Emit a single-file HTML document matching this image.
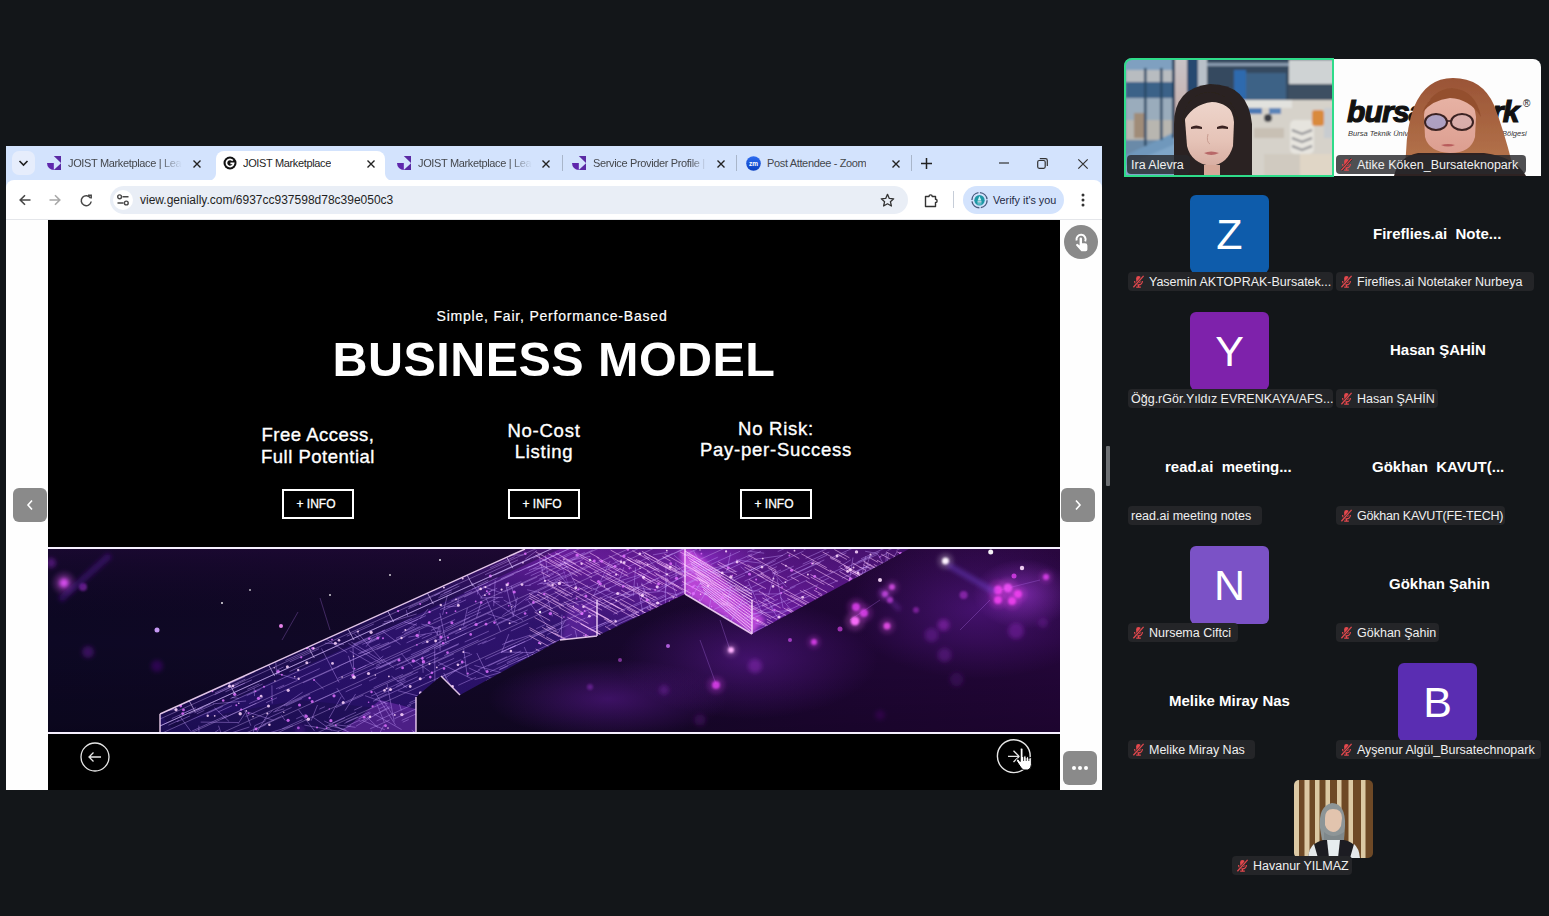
<!DOCTYPE html>
<html><head><meta charset="utf-8">
<style>
*{box-sizing:border-box;margin:0;padding:0}
html,body{width:1549px;height:916px;overflow:hidden;background:#131619;font-family:"Liberation Sans",sans-serif}
.a{position:absolute}
svg.a{overflow:visible}
.tt{position:absolute;top:157px;font-size:11px;letter-spacing:-0.35px;color:#44474c;white-space:nowrap;overflow:hidden;line-height:13px}
.sep{position:absolute;top:155px;width:1px;height:16px;background:#a9b6ca}
.w{color:#fff;position:absolute;white-space:nowrap}
.info{position:absolute;top:489px;width:72px;height:30px;border:2px solid #fff;color:#fff;font-size:12px;text-align:center;line-height:26px;-webkit-text-stroke:0.3px #fff}
.nb{position:absolute;background:#8a8a8a;border-radius:6px}
.lbl{position:absolute;height:19px;background:#242528;border-radius:4px;color:#f0f0f0;font-size:12.5px;line-height:20px;white-space:nowrap;padding-left:3px}
.lbl.m{padding-left:21px}
.bn{position:absolute;color:#fff;font-weight:bold;font-size:15px;white-space:nowrap;line-height:18px}
.av{position:absolute;width:79px;height:78px;border-radius:6px;color:#fff;font-size:43px;text-align:center;line-height:78px}
</style></head><body>
<!-- browser frame -->
<div class="a" style="left:6px;top:146px;width:1096px;height:644px;background:#d3e3fd"></div>
<div class="a" style="left:12px;top:151px;width:23px;height:24px;border-radius:7px;background:#e6edfc"></div>
<svg class="a" style="left:12px;top:151px" width="23" height="24"><path d="M7.5 10 L11.5 14 L15.5 10" fill="none" stroke="#1f1f1f" stroke-width="1.6"/></svg>
<!-- active tab -->
<div class="a" style="left:216px;top:151px;width:169px;height:30px;background:#fff;border-radius:8px 8px 0 0"></div>
<div class="a" style="left:208px;top:173px;width:8px;height:8px;background:radial-gradient(circle at 0 0,#d3e3fd 7.5px,#fff 8.5px)"></div>
<div class="a" style="left:385px;top:173px;width:8px;height:8px;background:radial-gradient(circle at 100% 0,#d3e3fd 7.5px,#fff 8.5px)"></div>
<!-- toolbar -->
<div class="a" style="left:6px;top:180px;width:1096px;height:40px;background:#fff;border-radius:8px 8px 0 0"></div>
<div class="a" style="left:6px;top:219px;width:1096px;height:1px;background:#e4e6ea"></div>
<!-- tab1 -->
<svg class="a" style="left:47px;top:156px" width="14" height="14"><path d="M6.8 0H14V7Z M6.8 14L14 7.2V14Z" fill="#5a2aa4"/><path d="M0 7H6.8V14A6.8 7 0 0 1 0 7Z" fill="#5f26ad"/></svg>
<div class="tt" style="left:68px;width:114px;-webkit-mask-image:linear-gradient(90deg,#000 80%,transparent)">JOIST Marketplace | Lead</div>
<svg class="a" style="left:193px;top:160px" width="8" height="8"><path d="M0.5 0.5 L7.5 7.5 M7.5 0.5 L0.5 7.5" stroke="#222" stroke-width="1.4"/></svg>
<!-- tab2 active -->
<svg class="a" style="left:223px;top:156px" width="14" height="14"><circle cx="7" cy="7" r="6.5" fill="#111"/><path d="M9.8 4.6 A3.6 3.6 0 1 0 10.6 7.4 L7.4 7.4" fill="none" stroke="#fff" stroke-width="1.7"/></svg>
<div class="tt" style="left:243px;color:#1f1f1f">JOIST Marketplace</div>
<svg class="a" style="left:367px;top:160px" width="8" height="8"><path d="M0.5 0.5 L7.5 7.5 M7.5 0.5 L0.5 7.5" stroke="#222" stroke-width="1.4"/></svg>
<!-- tab3 -->
<svg class="a" style="left:397px;top:156px" width="14" height="14"><path d="M6.8 0H14V7Z M6.8 14L14 7.2V14Z" fill="#5a2aa4"/><path d="M0 7H6.8V14A6.8 7 0 0 1 0 7Z" fill="#5f26ad"/></svg>
<div class="tt" style="left:418px;width:114px;-webkit-mask-image:linear-gradient(90deg,#000 80%,transparent)">JOIST Marketplace | Lead</div>
<svg class="a" style="left:542px;top:160px" width="8" height="8"><path d="M0.5 0.5 L7.5 7.5 M7.5 0.5 L0.5 7.5" stroke="#222" stroke-width="1.4"/></svg>
<div class="sep" style="left:562px"></div>
<!-- tab4 -->
<svg class="a" style="left:572px;top:156px" width="14" height="14"><path d="M6.8 0H14V7Z M6.8 14L14 7.2V14Z" fill="#5a2aa4"/><path d="M0 7H6.8V14A6.8 7 0 0 1 0 7Z" fill="#5f26ad"/></svg>
<div class="tt" style="left:593px;width:114px;-webkit-mask-image:linear-gradient(90deg,#000 85%,transparent)">Service Provider Profile | JOIST</div>
<svg class="a" style="left:717px;top:160px" width="8" height="8"><path d="M0.5 0.5 L7.5 7.5 M7.5 0.5 L0.5 7.5" stroke="#222" stroke-width="1.4"/></svg>
<div class="sep" style="left:736px"></div>
<!-- tab5 -->
<svg class="a" style="left:746px;top:156px" width="15" height="15"><defs><linearGradient id="zg" x1="0" y1="0" x2="0" y2="1"><stop offset="0" stop-color="#2d6cf0"/><stop offset="1" stop-color="#0a3fc0"/></linearGradient></defs><circle cx="7.5" cy="7.5" r="7.3" fill="url(#zg)"/><text x="7.5" y="9.6" font-size="6.5" font-weight="bold" fill="#fff" text-anchor="middle" font-family="Liberation Sans">zm</text></svg>
<div class="tt" style="left:767px">Post Attendee - Zoom</div>
<svg class="a" style="left:892px;top:160px" width="8" height="8"><path d="M0.5 0.5 L7.5 7.5 M7.5 0.5 L0.5 7.5" stroke="#222" stroke-width="1.4"/></svg>
<div class="sep" style="left:911px"></div>
<svg class="a" style="left:921px;top:158px" width="11" height="11"><path d="M5.5 0 V11 M0 5.5 H11" stroke="#222" stroke-width="1.5"/></svg>
<!-- window controls -->
<svg class="a" style="left:999px;top:162px" width="11" height="2"><path d="M0 1 H10" stroke="#333" stroke-width="1.2"/></svg>
<svg class="a" style="left:1037px;top:158px" width="11" height="11"><rect x="0.7" y="2.5" width="7.5" height="7.8" rx="1.5" fill="none" stroke="#333" stroke-width="1.2"/><path d="M2.8 0.7 H8.5 A1.8 1.8 0 0 1 10.3 2.5 V8" fill="none" stroke="#333" stroke-width="1.2"/></svg>
<svg class="a" style="left:1078px;top:159px" width="10" height="10"><path d="M0.3 0.3 L9.7 9.7 M9.7 0.3 L0.3 9.7" stroke="#333" stroke-width="1.2"/></svg>
<!-- toolbar icons -->
<svg class="a" style="left:19px;top:194px" width="12" height="12"><path d="M11.5 6 H1.5 M6 1.2 L1.2 6 L6 10.8" fill="none" stroke="#474747" stroke-width="1.6"/></svg>
<svg class="a" style="left:49px;top:194px" width="12" height="12"><path d="M0.5 6 H10.5 M6 1.2 L10.8 6 L6 10.8" fill="none" stroke="#a8a8a8" stroke-width="1.6"/></svg>
<svg class="a" style="left:80px;top:194px" width="13" height="13"><path d="M10.6 4.2 A5 5 0 1 0 11.2 7.5" fill="none" stroke="#474747" stroke-width="1.5"/><path d="M8 1.3 H11.2 V4.5" fill="none" stroke="#474747" stroke-width="1.5"/></svg>
<!-- omnibox -->
<div class="a" style="left:110px;top:186px;width:798px;height:28px;border-radius:14px;background:#e9eef6"></div>
<div class="a" style="left:113px;top:190px;width:20px;height:20px;border-radius:10px;background:#fff"></div>
<svg class="a" style="left:116px;top:193px" width="14" height="14"><circle cx="3.6" cy="3.8" r="1.9" fill="none" stroke="#474747" stroke-width="1.4"/><path d="M6.5 3.8 H12.5 M1.5 10 H7.5" stroke="#474747" stroke-width="1.4"/><circle cx="10.3" cy="10" r="1.9" fill="none" stroke="#474747" stroke-width="1.4"/></svg>
<div class="a" style="left:140px;top:193px;font-size:12px;color:#1f1f1f;white-space:nowrap;line-height:14px">view.genially.com/6937cc937598d78c39e050c3</div>
<svg class="a" style="left:880px;top:193px" width="15" height="15"><path d="M7.5 1.3 L9.3 5.4 L13.7 5.8 L10.4 8.7 L11.4 13 L7.5 10.8 L3.6 13 L4.6 8.7 L1.3 5.8 L5.7 5.4 Z" fill="none" stroke="#333" stroke-width="1.3" stroke-linejoin="round"/></svg>
<svg class="a" style="left:924px;top:193px" width="15" height="15"><path d="M1.5 3.5 H5 A1.6 1.6 0 0 1 8.2 3.5 H11.5 V6.3 A1.6 1.6 0 0 1 11.5 9.5 V13.5 H1.5 Z" fill="none" stroke="#333" stroke-width="1.4" stroke-linejoin="round"/></svg>
<div class="a" style="left:953px;top:191px;width:1px;height:17px;background:#c6cdd8"></div>
<div class="a" style="left:963px;top:186px;width:101px;height:28px;border-radius:14px;background:#d3e3fd"></div>
<svg class="a" style="left:971px;top:191px" width="18" height="18"><circle cx="8.5" cy="9.2" r="7.6" fill="none" stroke="#4a5a7c" stroke-width="1.4" stroke-dasharray="10.5 1.5"/><circle cx="8.5" cy="9.2" r="5.2" fill="#1e98a6"/><path d="M8.5 5 L6.6 9.5 H10.4 Z" fill="#c8f4fa"/><rect x="6.5" y="10.3" width="4" height="1.2" fill="#f0e8f8"/><rect x="6.4" y="12" width="4.2" height="1.8" fill="#5ab8c4"/></svg>
<div class="a" style="left:993px;top:193px;font-size:10.8px;color:#1f2a44;white-space:nowrap;line-height:14px">Verify it's you</div>
<svg class="a" style="left:1081px;top:193px" width="4" height="14"><circle cx="2" cy="2" r="1.5" fill="#333"/><circle cx="2" cy="7" r="1.5" fill="#333"/><circle cx="2" cy="12" r="1.5" fill="#333"/></svg>
<!-- page -->
<div class="a" style="left:6px;top:220px;width:1096px;height:570px;background:#fefefe"></div>
<div class="a" style="left:48px;top:220px;width:1012px;height:570px;background:#000"></div>
<div class="w" style="left:46px;width:1012px;top:308px;text-align:center;font-size:14px;letter-spacing:0.8px;-webkit-text-stroke:0.2px #fff">Simple, Fair, Performance-Based</div>
<div class="w" style="left:48px;width:1012px;top:332px;text-align:center;font-size:48.5px;font-weight:bold;letter-spacing:0.45px;line-height:54px">BUSINESS MODEL</div>
<div class="w" style="left:218px;width:200px;top:424px;text-align:center;font-size:18.5px;line-height:21.6px;letter-spacing:0.5px;-webkit-text-stroke:0.35px #fff">Free Access,<br>Full Potential</div>
<div class="w" style="left:444px;width:200px;top:420px;text-align:center;font-size:18.5px;line-height:21.3px;letter-spacing:0.75px;-webkit-text-stroke:0.35px #fff">No-Cost<br>Listing</div>
<div class="w" style="left:676px;width:200px;top:418px;text-align:center;font-size:18.5px;line-height:21px;letter-spacing:0.75px;-webkit-text-stroke:0.35px #fff">No Risk:<br>Pay-per-Success</div>
<div class="info" style="left:282px;padding-right:4px">+ INFO</div>
<div class="info" style="left:508px;padding-right:4px">+ INFO</div>
<div class="info" style="left:740px;padding-right:4px">+ INFO</div>
<!-- IMAGE -->
<div class="a" style="left:48px;top:547px;width:1012px;height:2px;background:#f6f0ff"></div>
<div class="a" style="left:48px;top:732px;width:1012px;height:2px;background:#f6f0ff"></div>
<svg class="a" style="left:80px;top:742px" width="30" height="30"><circle cx="15" cy="15" r="14" fill="none" stroke="#e6e6e6" stroke-width="1.3"/><path d="M21 15 H9 M13.5 10.5 L9 15 L13.5 19.5" fill="none" stroke="#e6e6e6" stroke-width="1.3"/></svg>
<svg class="a" style="left:996px;top:738px" width="36" height="36"><circle cx="17.8" cy="18.2" r="16.4" fill="none" stroke="#e6e6e6" stroke-width="1.4"/><path d="M12 18.4 H23.5 M17.5 12.8 L23.2 18.4 L17.5 24" fill="none" stroke="#e6e6e6" stroke-width="1.3"/></svg>
<svg class="a" style="left:1015px;top:746px" width="20" height="26"><path d="M5.2 3.5 A1.4 1.4 0 0 1 8 3.5 V11 H8.6 A1.3 1.3 0 0 1 11.2 11 V12 A1.3 1.3 0 0 1 13.8 12 V12.8 A1.3 1.3 0 0 1 16.4 12.8 V18.5 Q16.4 22.5 13 24 H8.8 Q7 23.5 5.5 21 L1.5 15 A1.3 1.3 0 0 1 3.6 13.5 L5.2 15.5 Z" fill="#fff" stroke="#000" stroke-width="1"/><path d="M8.6 11 V15 M11.2 12 V15 M13.8 12.8 V15" stroke="#000" stroke-width="0.8"/></svg>
<!-- nav buttons -->
<div class="nb" style="left:13px;top:488px;width:34px;height:34px"></div>
<svg class="a" style="left:25px;top:499px" width="10" height="12"><path d="M7 1.5 L3 6 L7 10.5" fill="none" stroke="#fff" stroke-width="1.6"/></svg>
<div class="nb" style="left:1061px;top:488px;width:34px;height:34px"></div>
<svg class="a" style="left:1073px;top:499px" width="10" height="12"><path d="M3 1.5 L7 6 L3 10.5" fill="none" stroke="#fff" stroke-width="1.6"/></svg>
<div class="a" style="left:1064px;top:225px;width:34px;height:34px;border-radius:17px;background:#8a8a8a"></div>
<svg class="a" style="left:1064px;top:225px" width="34" height="34"><path d="M12.6 15.5 A4.6 4.6 0 1 1 21.2 16.4" fill="none" stroke="#fff" stroke-width="2"/><path d="M15.6 13.6 A1.2 1.2 0 0 1 18 13.6 V18.2 H21 A2.4 2.4 0 0 1 23.4 20.6 V24.5 Q23.4 26.2 21.6 26.2 H17.4 L12.4 20.8 A1.1 1.1 0 0 1 14 19.2 L15.6 20.6 Z" fill="#fff"/></svg>
<div class="nb" style="left:1063px;top:751px;width:34px;height:34px"></div>
<svg class="a" style="left:1071px;top:765px" width="18" height="6"><circle cx="3" cy="3" r="2" fill="#fff"/><circle cx="9" cy="3" r="2" fill="#fff"/><circle cx="15" cy="3" r="2" fill="#fff"/></svg>
<div class="a" style="left:48px;top:549px;width:1012px;height:183px;overflow:hidden"><svg style="position:absolute;left:0;top:0;overflow:hidden" width="1012" height="183" viewBox="0 0 1012 183">
<defs>
<linearGradient id="bg" x1="0" y1="0" x2="1" y2="0"><stop offset="0" stop-color="#0d0824"/><stop offset="0.45" stop-color="#130828"/><stop offset="0.75" stop-color="#1e0634"/><stop offset="1" stop-color="#24063a"/></linearGradient>
<radialGradient id="g1" cx="0.5" cy="0.5" r="0.5"><stop offset="0" stop-color="#b040e8" stop-opacity="0.5"/><stop offset="1" stop-color="#b040e8" stop-opacity="0"/></radialGradient>
<radialGradient id="g2" cx="0.5" cy="0.5" r="0.5"><stop offset="0" stop-color="#7a22c0" stop-opacity="0.4"/><stop offset="1" stop-color="#7a22c0" stop-opacity="0"/></radialGradient>
<linearGradient id="band" x1="0" y1="1" x2="1" y2="0"><stop offset="0" stop-color="#3a18b0" stop-opacity="0.45"/><stop offset="0.55" stop-color="#4a1eb0" stop-opacity="0.5"/><stop offset="0.75" stop-color="#9a2ae0" stop-opacity="0.6"/><stop offset="1" stop-color="#7a20c0" stop-opacity="0.35"/></linearGradient>
<linearGradient id="vd" x1="0" y1="0" x2="0" y2="1"><stop offset="0" stop-color="#3a0a50" stop-opacity="0.25"/><stop offset="0.5" stop-color="#000" stop-opacity="0"/><stop offset="1" stop-color="#000" stop-opacity="0.2"/></linearGradient>
<filter id="bl" x="-50%" y="-50%" width="200%" height="200%"><feGaussianBlur stdDeviation="2"/></filter>
<filter id="bl1" x="-50%" y="-50%" width="200%" height="200%"><feGaussianBlur stdDeviation="1"/></filter>
<clipPath id="cp"><polygon points="112.0,165.0 477.0,0.0 861.0,0.0 704.0,85.0 637.0,45.0 549.0,87.0 512.0,91.0 412.0,146.0 393.0,127.0 368.0,148.0 368.0,184.0 112.0,184.0"/></clipPath>
</defs>
<rect width="1012" height="183" fill="url(#bg)"/>
<rect width="1012" height="183" fill="url(#vd)"/>
<ellipse cx="930" cy="60" rx="130" ry="70" fill="url(#g2)"/>
<ellipse cx="975" cy="45" rx="50" ry="35" fill="url(#g1)"/>
<ellipse cx="700" cy="110" rx="130" ry="60" fill="url(#g2)"/>
<ellipse cx="660" cy="8" rx="60" ry="20" fill="url(#g1)"/>
<ellipse cx="560" cy="150" rx="120" ry="40" fill="url(#g2)"/>
<polygon points="112.0,165.0 477.0,0.0 861.0,0.0 704.0,85.0 637.0,45.0 549.0,87.0 512.0,91.0 412.0,146.0 393.0,127.0 368.0,148.0 368.0,184.0 112.0,184.0" fill="url(#band)"/>
<g clip-path="url(#cp)">
<polygon points="112.0,165.0 477.0,0.0 512.0,0.0 124.0,179.0" fill="#0c0626" fill-opacity="0.35"/>
<polygon points="112.0,184.0 368.0,184.0 368.0,163.0 252.0,151.0 112.0,176.0" fill="#100a30" fill-opacity="0.25"/>
<polygon points="637.0,45.0 704.0,85.0 717.0,71.0 657.0,11.0 642.0,0.0 632.0,0.0" fill="#f060ff" fill-opacity="0.6" filter="url(#bl)"/>
<path d="M637.0 2.0L704.0 42.0M638.5 5.2L704.0 45.2M640.0 8.4L704.0 48.4M641.5 11.6L704.0 51.6M643.0 14.8L704.0 54.8M644.5 18.0L704.0 58.0M646.0 21.2L704.0 61.2M647.5 24.4L704.0 64.4M649.0 27.6L704.0 67.6M650.5 30.8L704.0 70.8M652.0 34.0L704.0 74.0M653.5 37.2L704.0 77.2M655.0 40.4L704.0 80.4M656.5 43.6L704.0 83.6" stroke="#ffe0ff" stroke-opacity="0.7" stroke-width="1"/>
<polygon points="332.0,151.0 368.0,160.0 368.0,184.0 292.0,184.0" fill="#a040e0" fill-opacity="0.35"/>
<polygon points="512.0,91.0 549.0,87.0 549.0,51.0 522.0,56.0" fill="#a040e0" fill-opacity="0.3" filter="url(#bl)"/>
<path d="M112 165L1012 -242.7M112 170L1012 -237.7M112 177L1012 -230.7M112 185L1012 -222.7M112 198L1012 -209.7M112 212L1012 -195.7M112 223L1012 -184.7M112 237L1012 -170.7M112 255L1012 -152.7" stroke="#d8b8ff" stroke-opacity="0.45" stroke-width="0.8"/>
<path d="M697.3 41.2L719.7 31.0M331.1 159.9L337.6 156.9M488.5 101.3L523.8 85.3M571.7 8.0L599.9 -4.7M482.6 45.3L510.0 32.9M632.9 36.7L649.8 29.0M739.1 28.3L772.8 13.0M306.1 161.1L314.2 157.4M378.2 109.5L410.9 94.6M728.6 69.4L737.7 65.3M620.9 27.6L652.5 13.3M439.0 43.8L449.2 39.2M201.3 154.6L215.1 148.4M538.7 26.6L574.1 10.6M248.2 169.8L257.8 165.4M525.3 33.0L491.6 34.6M538.7 68.9L550.0 63.7M416.4 43.8L440.0 33.2M129.3 160.3L92.5 164.1M460.2 100.2L483.8 89.5M348.1 137.5L369.6 127.7M429.7 95.8L438.6 91.8M373.7 95.0L388.5 88.3M216.3 170.8L243.6 158.4M724.1 25.0L733.0 21.0M658.9 41.4L643.3 67.3M293.3 147.5L281.1 169.1M356.2 72.9L368.9 76.2M263.9 167.5L283.7 181.2M746.9 20.6L765.8 12.0M336.1 175.9L325.9 194.4M458.7 114.9L489.1 101.2M589.1 33.7L595.8 68.6M662.1 20.7L633.6 22.5M805.0 8.5L800.3 38.3M227.8 124.1L249.1 130.3M570.3 35.0L602.6 40.9M542.3 7.3L524.0 11.0M757.6 9.3L791.3 -6.0M360.8 58.2L392.1 44.0M714.0 57.4L730.0 50.2M199.4 140.3L211.5 134.9M779.6 36.1L790.1 31.4M569.2 17.6L559.9 18.4M351.9 132.1L357.5 129.6M601.1 39.3L629.5 46.0M392.1 46.3L403.7 41.0M451.5 120.3L478.3 108.1M386.2 98.7L418.5 84.1M354.0 83.7L366.7 77.9M545.9 54.8L571.6 43.2M335.9 152.4L345.3 167.0M577.3 34.2L611.0 19.0M389.0 130.1L420.5 115.8M683.2 34.9L678.9 57.1M305.0 98.1L305.8 128.8M698.4 72.3L713.8 65.3M593.7 33.8L605.0 66.6M391.2 76.8L388.9 86.0M517.6 70.9L509.7 84.7M206.1 139.1L206.5 147.1M808.8 22.6L821.4 16.9M170.7 180.8L162.9 185.9M542.7 81.7L567.5 70.5M677.8 34.9L696.9 26.2M692.2 12.4L654.6 22.2M464.5 6.0L475.6 6.1M143.7 182.2L178.8 166.3M241.5 122.6L262.9 112.9M304.7 96.4L322.8 88.2M317.9 94.5L331.7 88.2M772.5 32.8L781.2 28.9M277.6 177.5L296.9 168.8M562.0 12.2L545.6 46.9M682.5 30.3L715.3 15.5M353.7 171.4L379.6 159.7M170.5 176.7L177.2 196.7M317.1 146.7L339.7 154.9M419.6 126.7L432.0 121.0M743.0 61.3L703.2 64.8M615.6 38.3L625.6 33.7M460.9 74.9L480.0 66.2M662.8 15.5L692.0 2.3M817.7 7.2L812.5 33.9M448.7 115.5L475.1 103.5M524.1 13.6L485.3 20.1M556.8 40.7L577.0 47.6M250.6 160.8L266.6 182.1M458.7 113.5L470.5 108.2M529.9 72.5L537.5 69.0M487.8 61.9L500.4 56.2M423.9 33.6L434.1 49.5M371.5 81.9L370.0 89.4M386.2 106.4L410.5 95.4M390.4 48.8L403.6 42.9M627.9 13.4L628.1 28.6M480.8 36.2L505.9 24.9M387.5 99.9L401.4 93.6M289.5 117.7L322.2 102.9M390.0 116.6L406.2 109.3M298.8 87.2L325.8 75.0M256.4 176.1L291.2 182.4M646.4 35.8L675.2 59.2M677.7 62.9L707.6 49.4M476.7 25.9L496.3 17.1M439.8 117.1L473.1 102.0M840.5 4.7L839.4 12.4M452.8 29.8L469.9 22.1M307.6 145.0L297.0 161.7M241.7 112.9L271.0 99.7M412.9 76.4L443.6 62.5M729.0 29.4L735.1 59.0M614.6 9.0L624.5 4.6M694.6 39.1L701.7 35.9M358.5 93.9L377.6 85.2M334.0 81.9L352.5 95.6M640.9 23.7L609.4 42.6M727.6 21.5L720.5 46.3M497.4 6.4L499.4 24.6M340.9 115.1L348.3 111.7M325.6 138.7L354.9 125.4M120.4 176.2L130.9 171.4M649.5 37.5L686.8 42.4M662.7 51.0L659.2 70.7M445.0 52.7L451.6 52.8M458.7 39.2L473.3 32.6M310.2 104.7L332.3 94.7M490.2 13.7L526.1 -2.5M196.2 161.9L225.8 171.4M598.3 59.2L625.0 47.1M523.9 36.3L513.8 36.5M227.8 113.3L228.7 126.1M729.1 24.7L745.8 17.1M410.3 49.4L409.7 57.7M386.7 99.1L386.9 132.8M182.4 149.7L214.7 135.1M811.4 18.5L833.6 19.1M809.6 12.8L831.5 2.9M437.0 25.8L470.0 10.9M678.1 21.3L704.2 9.4M722.3 56.9L729.4 68.1M701.7 2.3L716.2 4.2M770.9 29.7L794.4 19.0M450.9 121.1L459.8 117.1M491.1 30.3L519.0 17.6M374.5 107.4L375.1 123.8M355.0 138.2L376.9 128.2M339.1 134.7L346.2 172.6M437.2 110.3L467.8 96.4M201.4 178.0L165.8 189.6M635.7 23.6L669.8 8.2M797.4 18.9L823.9 6.9M822.2 6.0L814.6 30.7M453.3 103.2L477.2 92.4M462.8 82.0L480.3 74.1M397.3 79.2L432.9 63.1M685.7 68.5L678.0 77.5M348.9 116.4L381.5 101.7M328.2 116.4L363.2 100.5M545.0 46.4L562.6 38.4M368.1 111.5L387.3 102.9M554.2 28.2L572.8 19.8M644.1 14.6L651.6 23.5M831.6 7.8L839.8 4.0M123.8 169.6L144.5 160.2M435.1 37.5L453.5 44.0M645.5 1.7L662.3 31.8M288.7 175.8L307.6 178.3M587.6 18.4L585.2 47.2M219.9 165.2L207.1 186.1M358.3 60.9L359.7 67.1M166.6 145.7L190.5 134.8M575.8 18.4L570.6 33.1M300.4 106.8L304.7 119.9M705.6 82.8L721.8 75.5M288.0 158.5L315.5 146.0M409.9 57.0L399.3 57.9M489.0 1.5L477.2 10.2M440.9 36.5L465.9 25.2M488.2 79.7L497.0 75.7M543.6 38.4L563.3 49.7M729.7 2.6L763.1 -12.6M637.8 35.6L656.4 27.1M515.1 10.4L528.8 37.9M430.2 120.8L459.1 107.7M393.7 92.2L374.5 103.7M327.8 120.2L352.8 108.9M233.3 165.9L237.0 171.4M323.2 147.0L357.5 131.4M321.2 131.8L328.4 128.5M357.2 110.3L390.3 95.3M812.9 9.9L839.8 -2.2M391.9 64.1L398.2 94.3M579.8 17.9L602.1 7.8M721.1 32.6L726.6 30.1M198.7 146.6L212.4 140.4M810.3 26.0L842.9 11.2M549.2 77.3L557.8 73.4M430.5 37.6L429.5 45.5M611.7 53.0L636.1 41.9M407.3 84.8L443.4 68.5M618.0 17.3L617.5 54.4M205.4 181.3L217.8 175.7M838.3 2.8L838.0 14.5M556.2 58.3L584.3 45.5M183.7 148.4L190.8 149.4M493.4 20.9L499.4 18.2M663.1 47.0L688.4 35.5M426.3 75.9L434.4 72.3M700.1 32.1L714.5 65.1M460.8 85.1L453.3 104.0M319.2 168.2L329.8 178.5M343.5 127.2L358.9 138.7M829.9 5.5L839.3 21.4M334.6 110.2L345.9 118.8M353.2 104.3L364.4 117.4M326.3 142.4L347.6 176.2M322.7 163.8L310.6 170.1M328.7 100.5L357.4 87.5M692.6 17.8L702.5 26.2M769.3 10.5L779.0 6.1M651.0 36.0L672.0 26.5M817.2 2.3L829.6 4.5M604.4 53.0L618.2 46.8M396.2 106.6L430.6 91.0M360.3 74.7L370.1 70.3M198.1 152.0L165.2 154.8M328.9 155.1L336.3 173.4M167.0 143.9L197.4 130.1M150.8 176.6L151.9 211.9M198.5 162.1L190.1 174.7M469.5 22.9L482.0 17.2M483.9 45.2L454.3 66.6M414.0 117.2L397.0 129.1M301.5 101.7L326.0 115.9M346.5 169.7L381.8 153.6M325.7 164.7L353.6 180.6M688.1 10.9L713.1 14.2M660.1 25.1L684.8 13.9M380.2 59.9L371.7 70.0M197.5 167.6L220.3 157.2M484.9 9.2L494.4 4.9M791.1 22.5L802.0 17.6M510.6 9.2L537.0 -2.8M415.7 100.1L419.4 127.8M848.8 3.1L834.2 27.4M696.5 32.2L728.9 17.6M454.2 95.6L465.2 90.6M418.1 66.9L441.7 56.2M479.9 51.5L503.0 81.8M439.0 53.7L419.4 64.1M364.8 113.3L370.6 110.7M527.1 81.2L532.0 101.6M206.7 176.7L217.7 171.7M351.2 129.6L364.6 123.5M303.4 93.1L336.3 113.8M624.7 36.8L636.3 66.9M347.5 120.4L367.4 111.4M444.2 41.2L433.1 47.7M673.9 66.6L680.1 67.3M783.6 10.5L798.4 3.8M694.3 47.8L714.6 38.6M348.0 89.4L381.6 74.1M395.7 124.0L403.1 137.9M365.9 111.2L381.9 122.6M453.8 103.0L486.1 103.6M197.8 163.2L202.8 176.7M480.9 21.6L495.5 14.9M433.2 52.7L428.6 68.5M596.4 40.5L593.0 50.4M385.2 114.1L405.9 104.8M714.3 42.8L725.6 60.7M457.5 34.5L465.4 67.7M410.2 136.3L427.9 128.3M456.3 42.9L489.2 28.0M598.5 34.2L610.8 28.7M739.1 54.5L757.6 46.1M360.1 59.8L380.6 50.5M383.9 77.1L390.5 86.8M831.8 15.7L842.4 10.9M439.6 64.7L469.4 73.9M489.4 35.6L517.4 22.9M276.2 172.0L305.1 185.0M206.7 176.7L200.9 204.1M429.4 36.1L440.3 31.2M368.8 74.5L357.8 81.5M297.6 142.8L314.0 135.4M476.2 98.0L492.2 133.4M452.0 123.7L426.6 130.6M343.1 71.6L335.9 72.7M439.3 53.7L450.6 48.6M626.0 6.0L649.2 26.9M329.1 147.0L354.8 135.3M368.6 65.0L334.4 75.1M609.1 12.2L635.9 0.1M409.1 116.7L417.6 112.8M244.9 176.8L214.8 185.8M511.8 14.8L536.8 3.5M419.4 58.9L415.5 76.8M437.9 48.9L452.6 82.6M517.6 40.5L490.2 61.3M455.1 48.3L432.1 49.0M470.3 61.4L498.5 48.6M395.4 84.8L392.7 91.1M621.5 49.5L641.3 40.5M741.4 50.5L723.8 57.0M348.8 132.5L370.2 122.8M271.4 160.1L276.9 157.7M392.1 60.6L413.1 51.0M445.5 52.5L475.0 71.4M395.9 60.8L418.1 50.8M390.2 113.3L424.4 130.1M482.9 36.2L476.9 36.7M655.3 28.8L636.9 59.6M697.2 23.6L706.5 19.4M306.2 84.5L311.8 90.6M364.8 119.9L390.3 108.4M289.7 129.4L318.3 116.4M152.7 173.1L190.4 173.5M544.2 49.8L512.8 56.5M434.3 94.7L447.4 88.8M498.7 45.4L504.3 67.3M701.3 80.1L684.8 104.6M513.9 65.6L513.0 97.6M141.1 164.9L154.7 158.7M421.9 68.4L394.9 82.5M228.8 121.1L235.6 118.0M619.9 3.2L604.9 5.9M276.8 94.2L296.1 95.3M323.3 181.7L337.4 212.0M420.7 118.9L447.4 131.1M218.1 153.7L229.0 148.7M251.3 128.9L271.7 119.6M224.6 161.4L220.0 165.5M255.0 133.8L291.3 117.4M745.8 46.7L770.2 35.6M484.2 87.7L515.5 73.6M482.7 89.2L506.5 78.4M450.0 74.2L479.6 60.9M702.8 20.9L712.5 16.5M387.5 91.9L418.7 77.7M447.8 76.1L462.6 69.4M284.0 174.2L308.1 163.2M314.6 171.5L336.9 180.8M415.3 109.1L424.1 105.1M170.1 163.0L184.0 156.7M839.6 1.5L875.6 -14.8M158.6 164.7L174.7 157.4M351.4 155.0L353.3 161.4M166.4 158.8L181.1 172.5M611.9 42.5L575.0 46.0M536.5 56.4L565.0 43.5M363.7 181.1L395.5 203.7M848.5 1.2L874.4 -10.5M327.2 150.3L339.3 144.8M173.7 169.9L208.4 154.2M742.6 26.2L776.3 10.9M395.8 44.1L411.5 37.0M377.2 126.9L413.3 110.5M477.5 51.4L509.6 36.8M362.9 105.9L397.9 90.1M722.9 20.9L738.7 38.1M314.3 95.4L332.4 87.3M438.0 131.7L464.6 119.7M699.4 3.1L713.3 -3.2M325.0 152.3L359.5 136.7M356.3 84.7L371.9 77.6M592.6 60.6L609.9 52.8M513.4 20.3L535.3 10.3M128.9 172.8L142.1 166.8M509.2 23.0L520.3 36.3M514.3 9.1L528.2 2.8M373.4 75.1L389.8 79.5M183.5 140.1L196.9 134.0M428.8 104.0L437.7 122.2M559.3 77.4L590.5 63.2M305.9 95.0L337.0 80.9M629.2 15.9L637.0 24.6M288.9 139.2L296.5 150.6M805.4 16.3L829.9 5.2M563.8 71.0L539.6 80.5M328.1 85.5L363.8 69.3M734.9 6.4L705.8 10.5M324.2 89.4L318.1 97.7M755.7 49.4L763.2 46.0M733.8 44.8L707.2 45.2M333.4 101.3L342.7 97.1M805.4 23.4L823.0 15.4M228.0 139.8L236.2 136.1M335.3 107.1L328.8 112.1M482.7 26.7L497.5 20.0M382.9 81.5L407.1 70.5M715.1 52.1L747.4 37.4M706.2 57.2L721.1 50.4M739.9 3.4L708.4 20.5M298.2 173.0L309.7 167.8M695.8 70.1L731.2 54.1M269.5 156.0L263.1 171.8M278.3 90.1L299.3 103.7M254.7 143.2L226.9 162.2M134.3 164.9L148.1 158.6M619.4 28.8L616.8 44.2M565.4 65.2L595.8 51.5M469.4 48.0L465.3 66.6M689.3 22.4L663.7 24.0M341.0 93.3L311.4 104.8M755.8 0.6L766.8 -4.4M341.4 157.6L308.0 177.2M567.0 36.2L576.0 32.1M637.8 21.2L630.5 25.7M307.8 82.0L334.5 111.7M385.4 71.3L393.4 67.7M131.2 166.3L143.1 182.7M601.4 52.9L617.1 45.8M699.4 8.4L712.9 2.3M666.0 60.4L680.7 53.8M482.5 86.0L458.1 93.8M609.5 39.6L644.7 23.6M238.0 156.9L254.2 149.5M442.1 18.8L466.7 7.6M543.5 47.5L562.6 38.9M680.1 68.6L682.2 84.1M361.3 153.8L378.7 145.9M664.5 22.8L688.5 11.9M214.6 175.8L232.8 167.5M366.4 182.1L343.0 197.7M328.6 172.0L363.1 156.4M807.5 28.4L837.9 14.6M793.8 29.4L811.6 21.3M694.6 50.4L676.2 85.0M541.4 51.2L563.0 59.5M350.0 141.7L373.7 147.9M564.2 9.1L571.5 15.9M326.4 165.9L342.5 158.6M230.7 139.8L249.5 131.3M447.2 31.2L445.7 57.2M148.8 164.8L156.3 161.4M273.5 99.5L291.1 133.4M296.4 174.4L321.7 163.0M707.5 74.1L715.5 76.4M558.3 40.4L567.7 36.2M311.6 172.7L323.1 167.5M322.2 179.8L341.8 170.9M688.4 12.1L704.3 4.9M754.7 15.1L781.3 3.0M359.2 156.7L395.5 140.2M510.8 16.5L544.8 1.1M676.3 62.4L683.5 59.1M721.8 17.5L755.5 2.2M480.4 18.3L512.0 3.9M280.7 176.2L298.3 181.2M665.6 53.3L685.1 44.5M426.4 116.4L462.6 126.2M180.1 135.4L196.9 127.7M732.3 48.2L751.8 71.2M234.2 179.8L254.5 170.6M331.3 119.3L343.1 113.9M399.4 46.2L394.6 65.9M236.2 159.8L225.2 163.0M685.4 40.9L712.2 42.1M298.9 177.0L312.2 171.0M327.7 119.7L351.9 108.7M400.3 85.1L427.9 72.6M455.7 51.0L467.8 58.1M463.3 36.8L467.9 52.8M416.1 48.0L443.1 35.7M393.7 82.0L360.4 88.2M536.2 40.5L569.0 25.6M300.3 94.3L333.0 114.4M177.4 142.8L204.0 130.8M594.2 25.3L566.7 33.4M415.1 103.1L422.2 104.4M704.5 22.1L727.7 11.6M622.2 29.3L630.2 25.6M267.2 152.4L290.6 141.8M722.0 69.5L751.1 56.3M506.7 31.7L539.4 16.9M223.9 136.3L224.2 154.5M634.5 6.7L649.0 0.1M702.0 61.8L718.7 54.3M495.4 35.6L515.5 26.5M567.4 72.7L599.8 58.0M655.7 46.0L664.1 42.2M149.2 161.0L162.5 155.0M566.5 76.7L586.8 67.5M373.8 89.6L384.0 85.0M490.9 5.7L497.2 33.9M403.1 52.1L424.1 42.5M572.7 46.9L591.4 38.4M442.0 122.7L458.1 115.4M266.0 130.8L275.7 140.2M302.0 129.9L331.8 116.4M682.6 3.8L678.9 21.7M802.9 10.8L790.7 18.2M642.8 44.6L631.0 59.9M515.7 47.6L540.0 36.6M742.0 38.8L758.9 31.2M446.7 26.0L482.0 10.0M579.0 48.4L586.8 44.9M729.0 36.7L763.6 21.0M424.0 40.2L449.4 28.7M585.7 57.6L608.3 47.3M235.9 156.9L261.8 145.2M237.5 111.5L263.2 99.9M321.2 93.9L329.0 90.3M453.7 103.1L467.6 96.8M478.8 19.4L490.4 14.1M309.5 120.3L328.6 111.7M391.9 77.4L392.1 101.7M409.7 35.1L386.5 46.6M146.4 163.9L166.1 155.0M416.7 93.0L440.9 82.1M499.2 85.5L521.4 75.4M782.3 9.3L814.3 -5.2M469.5 112.3L495.4 100.6M594.8 3.5L611.7 23.4M289.6 182.6L303.1 176.5M354.7 173.2L360.7 170.5M479.1 40.7L491.4 43.6M347.6 80.4L377.9 66.6" stroke="#c8a0ff" stroke-opacity="0.5" stroke-width="0.8"/>
<path d="M501.3 11.6l28.4 15.6M499.8 4.4l29.3 16.1M483.8 105.6l27.9 15.3M738.9 2.8l12.4 6.8M696.1 64.7l26.3 14.5M481.4 78.5l15.4 8.5M583.4 65.4l14.4 7.9M543.5 61.3l23.2 12.7M719.8 18.5l9.9 5.4M571.3 19.4l8.1 4.5M601.7 58.2l28.5 15.7M555.7 50.8l15.8 8.7M795.5 15.8l25.5 14.0M687.1 39.0l17.4 9.6M519.3 68.2l10.0 5.5M624.7 34.4l18.4 10.1M590.5 45.4l11.8 6.5M540.3 62.9l9.8 5.4M742.8 27.9l8.4 4.6M687.4 36.6l16.8 9.2M762.7 28.0l13.7 7.5M571.1 44.0l15.4 8.5M522.8 40.3l29.2 16.0M558.6 24.2l26.2 14.4M607.9 25.2l23.5 12.9M535.0 86.0l13.4 7.4M557.6 27.2l24.5 13.5M481.3 46.9l23.4 12.8M524.5 29.4l19.6 10.8M674.2 53.3l13.3 7.3M487.7 100.0l12.6 6.9M571.8 54.5l17.2 9.5M562.7 54.1l14.1 7.7M533.5 55.4l27.5 15.1M714.4 48.9l18.2 10.0M766.6 19.9l22.9 12.6M645.5 12.5l27.7 15.3M486.6 68.5l21.7 11.9M675.3 45.2l11.5 6.3M578.4 9.7l15.0 8.3M833.2 5.2l28.3 15.6M594.8 29.5l9.0 5.0M791.7 22.7l12.9 7.1M782.0 8.4l21.6 11.9M739.3 49.3l26.8 14.7M537.4 13.0l26.0 14.3M584.6 21.8l24.1 13.2M718.7 70.1l23.4 12.9M660.9 47.5l16.2 8.9M838.3 2.9l9.4 5.1M504.5 51.5l22.0 12.1M710.0 51.5l9.6 5.3M581.0 36.9l25.6 14.1M560.3 20.3l10.9 6.0M573.2 41.1l8.5 4.7M742.3 46.0l30.0 16.5M498.2 77.2l11.7 6.4M507.3 3.8l20.8 11.4M789.5 5.4l9.4 5.1M709.6 25.9l29.6 16.3M765.9 41.1l8.4 4.6M848.6 2.5l23.1 12.7M849.6 6.1l26.6 14.6M510.4 37.7l14.5 8.0M632.0 2.9l8.2 4.5M821.2 8.5l8.8 4.8M674.3 44.3l9.3 5.1M651.4 12.1l24.6 13.5M481.5 86.8l19.6 10.8M828.9 11.1l27.7 15.2M530.7 38.5l21.9 12.1M590.5 11.4l21.1 11.6M673.0 50.6l12.4 6.8M596.5 42.4l12.9 7.1M571.8 49.9l29.5 16.2M527.9 71.7l29.0 15.9M638.6 23.5l17.6 9.7M753.3 4.8l25.5 14.0M751.9 41.4l23.8 13.1M662.4 33.7l14.1 7.8M797.9 20.6l12.4 6.8M590.5 22.4l24.5 13.5M735.7 43.6l29.2 16.0M510.8 58.3l29.6 16.3M699.6 15.8l15.9 8.7M622.8 15.5l9.4 5.2M786.4 0.5l15.0 8.3M525.2 58.3l9.5 5.2M550.7 11.1l29.7 16.4M606.2 23.4l14.8 8.1M532.9 74.8l26.6 14.7M804.5 14.0l13.4 7.4M735.7 59.1l29.1 16.0M594.1 50.5l18.8 10.3M527.8 46.7l26.3 14.5M498.5 35.1l21.2 11.7M487.6 6.4l24.9 13.7M712.9 24.0l9.6 5.3M504.8 63.9l9.9 5.5M693.6 45.5l15.9 8.7M549.8 81.7l27.3 15.0M498.2 87.9l28.0 15.4M572.7 61.5l23.6 13.0M491.1 14.7l21.2 11.6M493.1 23.0l9.1 5.0M733.2 14.3l28.4 15.6M601.0 52.7l22.5 12.4M557.1 77.4l21.5 11.9M635.1 14.8l26.5 14.6M589.8 24.8l13.2 7.3M599.2 59.5l21.6 11.9M551.7 48.4l23.0 12.7M499.4 34.5l24.6 13.5M593.0 35.5l10.1 5.5M506.7 42.7l24.0 13.2M700.4 6.1l27.9 15.3M562.6 1.1l21.8 12.0M506.6 83.9l11.7 6.5M536.3 57.7l28.2 15.5M617.7 14.7l10.2 5.6M690.6 12.1l13.1 7.2M543.6 48.1l26.8 14.7M758.2 32.0l21.0 11.5M593.9 2.3l15.4 8.5M487.6 2.8l25.7 14.1M727.5 60.9l22.2 12.2M770.1 45.0l10.6 5.8M825.8 15.4l13.1 7.2M490.0 42.7l25.8 14.2M587.7 65.0l25.8 14.2M598.9 22.1l9.6 5.3M588.0 10.4l19.5 10.7M489.0 45.4l23.7 13.0M586.7 37.9l15.2 8.3M499.7 31.2l9.4 5.2M616.5 16.9l17.2 9.4M560.6 80.2l28.6 15.7M638.0 23.0l24.1 13.2M815.2 15.7l12.7 7.0M595.8 6.2l26.6 14.6M579.0 10.2l22.7 12.5M660.9 30.7l14.4 7.9M555.9 69.8l13.9 7.7M638.1 25.6l11.9 6.5M701.1 30.4l16.9 9.3M796.0 17.3l15.9 8.8M609.1 13.8l14.3 7.9M506.5 10.9l27.2 15.0M619.1 43.9l24.7 13.6M616.3 5.0l18.8 10.4M515.0 8.8l29.2 16.0M560.8 6.7l22.8 12.6M806.4 23.3l28.9 15.9M575.1 36.4l26.1 14.4M700.6 56.9l22.0 12.1M762.5 25.5l23.3 12.8M596.7 13.0l25.0 13.8M634.0 32.4l24.7 13.6M481.7 80.6l27.2 15.0M711.0 42.4l15.5 8.5M755.4 40.9l16.0 8.8M579.1 60.1l13.4 7.4M704.7 68.2l28.3 15.6M516.0 13.2l27.9 15.3M510.9 31.5l17.7 9.7M584.4 1.6l16.8 9.3M586.5 10.8l10.9 6.0M480.9 49.0l29.5 16.2M596.9 3.9l22.8 12.5M561.9 47.9l29.2 16.1M612.9 29.1l21.9 12.0M765.1 13.1l19.3 10.6M739.3 59.0l24.5 13.5M738.1 41.5l27.5 15.1M546.0 22.8l26.6 14.6M486.6 63.1l15.6 8.6M531.6 12.6l19.1 10.5M781.8 21.0l28.8 15.8M503.4 82.9l19.1 10.5M703.1 56.3l25.6 14.1M542.3 30.6l19.5 10.8M592.3 61.2l26.3 14.5M650.4 29.1l9.5 5.2M643.7 11.0l8.0 4.4M481.2 44.5l10.0 5.5M670.2 12.8l17.6 9.7M518.8 56.3l16.1 8.8M718.9 72.8l29.1 16.0M532.6 7.9l29.9 16.5M714.0 55.8l11.0 6.0M738.6 60.2l26.4 14.5M696.5 18.1l19.2 10.6M635.8 15.6l26.5 14.6M797.7 18.8l16.1 8.9M532.2 74.6l25.0 13.7M792.3 18.8l8.1 4.5M774.5 2.9l18.3 10.1M724.4 23.1l15.3 8.4M815.2 11.9l13.5 7.4M579.2 37.6l14.6 8.0M609.6 53.6l17.2 9.5M712.3 24.9l18.9 10.4M669.4 14.9l19.5 10.8M817.2 13.8l24.2 13.3M525.6 2.0l26.2 14.4M597.5 52.1l29.2 16.0M548.7 8.3l22.7 12.5M801.0 31.9l13.6 7.5M523.4 77.6l20.7 11.4M618.0 15.7l17.6 9.7M639.9 4.7l13.2 7.2M515.8 52.9l15.3 8.4M579.5 8.0l13.0 7.2M609.1 30.9l19.9 10.9M541.8 3.9l9.5 5.2M549.6 54.1l20.0 11.0M494.1 78.2l17.1 9.4M614.5 7.5l8.1 4.5M496.8 43.8l14.1 7.7M608.6 11.8l29.4 16.1" stroke="#ffc8ff" stroke-opacity="0.6" stroke-width="0.9"/>
<circle cx="546.3" cy="11.9" r="1.4" fill="#e070ff" fill-opacity="0.85"/>
<circle cx="264.7" cy="99.3" r="1.4" fill="#e070ff" fill-opacity="0.85"/>
<circle cx="733.2" cy="43.9" r="1.0" fill="#e070ff" fill-opacity="0.85"/>
<circle cx="573.1" cy="12.7" r="1.2" fill="#ffd8ff" fill-opacity="0.85"/>
<circle cx="287.4" cy="94.3" r="1.5" fill="#ffd8ff" fill-opacity="0.85"/>
<circle cx="175.2" cy="151.5" r="1.3" fill="#e070ff" fill-opacity="0.85"/>
<circle cx="213.1" cy="147.2" r="1.4" fill="#ffd8ff" fill-opacity="0.85"/>
<circle cx="684.4" cy="26.5" r="0.8" fill="#e070ff" fill-opacity="0.85"/>
<circle cx="622.3" cy="18.1" r="1.4" fill="#ffd8ff" fill-opacity="0.85"/>
<circle cx="246.7" cy="127.8" r="0.8" fill="#ffd8ff" fill-opacity="0.85"/>
<circle cx="368.9" cy="95.8" r="0.9" fill="#e070ff" fill-opacity="0.85"/>
<circle cx="528.6" cy="49.7" r="0.9" fill="#e070ff" fill-opacity="0.85"/>
<circle cx="208.1" cy="180.0" r="1.4" fill="#e070ff" fill-opacity="0.85"/>
<circle cx="134.7" cy="164.6" r="1.4" fill="#e070ff" fill-opacity="0.85"/>
<circle cx="709.6" cy="71.4" r="1.0" fill="#ffd8ff" fill-opacity="0.85"/>
<circle cx="226.3" cy="118.8" r="0.8" fill="#ffd8ff" fill-opacity="0.85"/>
<circle cx="240.1" cy="171.3" r="1.6" fill="#e070ff" fill-opacity="0.85"/>
<circle cx="527.8" cy="38.8" r="1.5" fill="#ffd8ff" fill-opacity="0.85"/>
<circle cx="485.4" cy="53.4" r="1.3" fill="#e070ff" fill-opacity="0.85"/>
<circle cx="678.1" cy="2.4" r="1.1" fill="#ffd8ff" fill-opacity="0.85"/>
<circle cx="541.4" cy="67.2" r="1.4" fill="#ffd8ff" fill-opacity="0.85"/>
<circle cx="353.5" cy="89.0" r="1.2" fill="#ffd8ff" fill-opacity="0.85"/>
<circle cx="350.1" cy="62.1" r="1.1" fill="#e070ff" fill-opacity="0.85"/>
<circle cx="460.2" cy="34.3" r="1.1" fill="#e070ff" fill-opacity="0.85"/>
<circle cx="286.0" cy="146.8" r="1.6" fill="#e070ff" fill-opacity="0.85"/>
<circle cx="599.2" cy="50.9" r="1.5" fill="#e070ff" fill-opacity="0.85"/>
<circle cx="708.1" cy="30.5" r="1.0" fill="#e070ff" fill-opacity="0.85"/>
<circle cx="663.5" cy="57.6" r="0.8" fill="#e070ff" fill-opacity="0.85"/>
<circle cx="535.5" cy="57.7" r="1.3" fill="#ffd8ff" fill-opacity="0.85"/>
<circle cx="207.5" cy="142.3" r="0.9" fill="#e070ff" fill-opacity="0.85"/>
<circle cx="323.1" cy="83.3" r="1.6" fill="#ffd8ff" fill-opacity="0.85"/>
<circle cx="321.2" cy="89.6" r="1.2" fill="#e070ff" fill-opacity="0.85"/>
<circle cx="221.4" cy="175.7" r="1.3" fill="#ffd8ff" fill-opacity="0.85"/>
<circle cx="383.9" cy="123.8" r="1.3" fill="#e070ff" fill-opacity="0.85"/>
<circle cx="674.1" cy="48.5" r="1.5" fill="#e070ff" fill-opacity="0.85"/>
<circle cx="284.5" cy="114.4" r="1.4" fill="#ffd8ff" fill-opacity="0.85"/>
<circle cx="768.3" cy="39.7" r="0.9" fill="#e070ff" fill-opacity="0.85"/>
<circle cx="346.8" cy="165.9" r="0.9" fill="#ffd8ff" fill-opacity="0.85"/>
<circle cx="595.6" cy="28.3" r="1.6" fill="#ffd8ff" fill-opacity="0.85"/>
<circle cx="181.3" cy="137.2" r="1.4" fill="#ffd8ff" fill-opacity="0.85"/>
<circle cx="579.9" cy="0.4" r="1.3" fill="#e070ff" fill-opacity="0.85"/>
<circle cx="552.3" cy="34.8" r="1.5" fill="#e070ff" fill-opacity="0.85"/>
<circle cx="575.0" cy="37.4" r="1.2" fill="#e070ff" fill-opacity="0.85"/>
<circle cx="388.8" cy="118.4" r="0.9" fill="#ffd8ff" fill-opacity="0.85"/>
<circle cx="410.4" cy="56.4" r="1.4" fill="#ffd8ff" fill-opacity="0.85"/>
<circle cx="731.0" cy="68.0" r="1.6" fill="#ffd8ff" fill-opacity="0.85"/>
<circle cx="387.6" cy="92.0" r="1.4" fill="#ffd8ff" fill-opacity="0.85"/>
<circle cx="534.2" cy="64.6" r="1.3" fill="#e070ff" fill-opacity="0.85"/>
<circle cx="188.3" cy="156.3" r="1.0" fill="#e070ff" fill-opacity="0.85"/>
<circle cx="393.0" cy="87.9" r="1.5" fill="#e070ff" fill-opacity="0.85"/>
<circle cx="322.0" cy="167.8" r="1.3" fill="#ffd8ff" fill-opacity="0.85"/>
<circle cx="808.5" cy="2.9" r="1.7" fill="#ffd8ff" fill-opacity="0.85"/>
<circle cx="653.4" cy="4.7" r="0.9" fill="#e070ff" fill-opacity="0.85"/>
<circle cx="428.1" cy="75.5" r="1.6" fill="#e070ff" fill-opacity="0.85"/>
<circle cx="185.0" cy="137.1" r="1.3" fill="#ffd8ff" fill-opacity="0.85"/>
<circle cx="250.4" cy="178.9" r="1.4" fill="#e070ff" fill-opacity="0.85"/>
<circle cx="442.4" cy="27.1" r="1.5" fill="#e070ff" fill-opacity="0.85"/>
<circle cx="381.2" cy="73.7" r="1.4" fill="#e070ff" fill-opacity="0.85"/>
<circle cx="477.1" cy="64.5" r="1.3" fill="#e070ff" fill-opacity="0.85"/>
<circle cx="689.1" cy="13.0" r="1.4" fill="#ffd8ff" fill-opacity="0.85"/>
<circle cx="446.5" cy="73.6" r="1.3" fill="#e070ff" fill-opacity="0.85"/>
<circle cx="453.6" cy="40.6" r="1.1" fill="#ffd8ff" fill-opacity="0.85"/>
<circle cx="324.6" cy="157.3" r="1.1" fill="#e070ff" fill-opacity="0.85"/>
<circle cx="737.4" cy="33.2" r="0.9" fill="#ffd8ff" fill-opacity="0.85"/>
<circle cx="628.5" cy="29.3" r="1.6" fill="#e070ff" fill-opacity="0.85"/>
<circle cx="576.0" cy="7.1" r="1.6" fill="#e070ff" fill-opacity="0.85"/>
<circle cx="766.7" cy="27.3" r="1.4" fill="#e070ff" fill-opacity="0.85"/>
<circle cx="316.1" cy="168.2" r="1.4" fill="#e070ff" fill-opacity="0.85"/>
<circle cx="414.7" cy="29.4" r="1.0" fill="#ffd8ff" fill-opacity="0.85"/>
<circle cx="852.6" cy="4.3" r="1.4" fill="#e070ff" fill-opacity="0.85"/>
<circle cx="511.4" cy="34.4" r="1.7" fill="#ffd8ff" fill-opacity="0.85"/>
<circle cx="660.0" cy="37.1" r="1.1" fill="#ffd8ff" fill-opacity="0.85"/>
<circle cx="697.9" cy="38.4" r="0.7" fill="#ffd8ff" fill-opacity="0.85"/>
<circle cx="433.2" cy="53.5" r="1.3" fill="#e070ff" fill-opacity="0.85"/>
<circle cx="198.3" cy="161.7" r="0.8" fill="#ffd8ff" fill-opacity="0.85"/>
<circle cx="362.2" cy="137.5" r="1.4" fill="#ffd8ff" fill-opacity="0.85"/>
<circle cx="281.3" cy="159.9" r="0.7" fill="#e070ff" fill-opacity="0.85"/>
<circle cx="226.9" cy="132.0" r="0.8" fill="#ffd8ff" fill-opacity="0.85"/>
<circle cx="251.5" cy="155.9" r="1.5" fill="#e070ff" fill-opacity="0.85"/>
<circle cx="258.1" cy="167.3" r="1.7" fill="#e070ff" fill-opacity="0.85"/>
<circle cx="599.7" cy="15.8" r="0.8" fill="#ffd8ff" fill-opacity="0.85"/>
<circle cx="395.1" cy="94.3" r="1.3" fill="#e070ff" fill-opacity="0.85"/>
<circle cx="474.9" cy="13.7" r="0.9" fill="#ffd8ff" fill-opacity="0.85"/>
<circle cx="381.5" cy="114.8" r="1.1" fill="#ffd8ff" fill-opacity="0.85"/>
<circle cx="497.0" cy="31.8" r="1.1" fill="#ffd8ff" fill-opacity="0.85"/>
<circle cx="295.2" cy="153.4" r="1.5" fill="#ffd8ff" fill-opacity="0.85"/>
<circle cx="550.5" cy="32.5" r="1.5" fill="#e070ff" fill-opacity="0.85"/>
<circle cx="537.9" cy="86.2" r="1.0" fill="#e070ff" fill-opacity="0.85"/>
<circle cx="553.6" cy="12.3" r="1.4" fill="#e070ff" fill-opacity="0.85"/>
<circle cx="278.6" cy="179.1" r="0.9" fill="#e070ff" fill-opacity="0.85"/>
<circle cx="409.9" cy="115.8" r="1.3" fill="#ffd8ff" fill-opacity="0.85"/>
<circle cx="357.4" cy="81.1" r="1.0" fill="#ffd8ff" fill-opacity="0.85"/>
<circle cx="516.0" cy="10.5" r="0.7" fill="#ffd8ff" fill-opacity="0.85"/>
<circle cx="216.0" cy="137.7" r="1.0" fill="#e070ff" fill-opacity="0.85"/>
<circle cx="619.0" cy="25.4" r="1.1" fill="#ffd8ff" fill-opacity="0.85"/>
<circle cx="190.8" cy="154.3" r="0.8" fill="#ffd8ff" fill-opacity="0.85"/>
<circle cx="463.8" cy="57.8" r="0.7" fill="#ffd8ff" fill-opacity="0.85"/>
<circle cx="291.0" cy="91.2" r="1.3" fill="#ffd8ff" fill-opacity="0.85"/>
<circle cx="645.4" cy="44.6" r="1.6" fill="#e070ff" fill-opacity="0.85"/>
<circle cx="336.5" cy="141.4" r="1.3" fill="#ffd8ff" fill-opacity="0.85"/>
<circle cx="398.5" cy="63.8" r="0.9" fill="#e070ff" fill-opacity="0.85"/>
<circle cx="466.2" cy="43.0" r="1.6" fill="#e070ff" fill-opacity="0.85"/>
<circle cx="438.0" cy="75.2" r="1.4" fill="#e070ff" fill-opacity="0.85"/>
<circle cx="460.7" cy="56.8" r="0.8" fill="#e070ff" fill-opacity="0.85"/>
<circle cx="250.2" cy="120.9" r="1.2" fill="#ffd8ff" fill-opacity="0.85"/>
<circle cx="374.4" cy="109.4" r="1.3" fill="#e070ff" fill-opacity="0.85"/>
<circle cx="260.3" cy="170.2" r="1.7" fill="#ffd8ff" fill-opacity="0.85"/>
<circle cx="822.5" cy="5.6" r="1.0" fill="#ffd8ff" fill-opacity="0.85"/>
<circle cx="714.8" cy="9.6" r="0.9" fill="#ffd8ff" fill-opacity="0.85"/>
<circle cx="400.0" cy="88.6" r="1.1" fill="#e070ff" fill-opacity="0.85"/>
<circle cx="461.6" cy="74.2" r="1.0" fill="#ffd8ff" fill-opacity="0.85"/>
<circle cx="618.8" cy="1.6" r="0.9" fill="#ffd8ff" fill-opacity="0.85"/>
<circle cx="407.5" cy="62.2" r="0.9" fill="#e070ff" fill-opacity="0.85"/>
<circle cx="310.0" cy="82.4" r="1.0" fill="#ffd8ff" fill-opacity="0.85"/>
<circle cx="810.1" cy="23.7" r="1.2" fill="#ffd8ff" fill-opacity="0.85"/>
<circle cx="372.5" cy="143.9" r="1.6" fill="#ffd8ff" fill-opacity="0.85"/>
<circle cx="419.8" cy="124.5" r="1.1" fill="#e070ff" fill-opacity="0.85"/>
<circle cx="568.2" cy="51.4" r="0.9" fill="#ffd8ff" fill-opacity="0.85"/>
<circle cx="491.2" cy="93.9" r="1.2" fill="#e070ff" fill-opacity="0.85"/>
<circle cx="568.2" cy="25.6" r="1.1" fill="#ffd8ff" fill-opacity="0.85"/>
<circle cx="644.8" cy="38.1" r="1.4" fill="#e070ff" fill-opacity="0.85"/>
<circle cx="266.0" cy="131.0" r="1.0" fill="#e070ff" fill-opacity="0.85"/>
<circle cx="802.3" cy="30.0" r="1.5" fill="#e070ff" fill-opacity="0.85"/>
<circle cx="441.3" cy="44.9" r="1.1" fill="#e070ff" fill-opacity="0.85"/>
<circle cx="504.6" cy="36.0" r="1.2" fill="#ffd8ff" fill-opacity="0.85"/>
<circle cx="594.4" cy="46.3" r="1.6" fill="#ffd8ff" fill-opacity="0.85"/>
<circle cx="404.5" cy="137.4" r="1.4" fill="#ffd8ff" fill-opacity="0.85"/>
<circle cx="329.8" cy="89.0" r="1.5" fill="#e070ff" fill-opacity="0.85"/>
<circle cx="569.6" cy="44.6" r="1.5" fill="#ffd8ff" fill-opacity="0.85"/>
<circle cx="607.1" cy="41.0" r="0.9" fill="#e070ff" fill-opacity="0.85"/>
<circle cx="537.9" cy="47.1" r="1.5" fill="#e070ff" fill-opacity="0.85"/>
<circle cx="186.7" cy="145.3" r="1.6" fill="#e070ff" fill-opacity="0.85"/>
<circle cx="240.2" cy="141.3" r="1.6" fill="#ffd8ff" fill-opacity="0.85"/>
<circle cx="369.1" cy="86.4" r="1.6" fill="#e070ff" fill-opacity="0.85"/>
<circle cx="609.6" cy="54.0" r="1.6" fill="#ffd8ff" fill-opacity="0.85"/>
<circle cx="399.5" cy="103.6" r="1.3" fill="#e070ff" fill-opacity="0.85"/>
<circle cx="799.6" cy="22.4" r="1.4" fill="#ffd8ff" fill-opacity="0.85"/>
<circle cx="372.2" cy="55.0" r="1.0" fill="#e070ff" fill-opacity="0.85"/>
<circle cx="789.0" cy="7.0" r="1.4" fill="#ffd8ff" fill-opacity="0.85"/>
<circle cx="763.8" cy="14.4" r="1.0" fill="#e070ff" fill-opacity="0.85"/>
<circle cx="621.6" cy="52.3" r="0.9" fill="#ffd8ff" fill-opacity="0.85"/>
<circle cx="714.0" cy="18.1" r="1.4" fill="#ffd8ff" fill-opacity="0.85"/>
<circle cx="335.0" cy="89.3" r="1.0" fill="#e070ff" fill-opacity="0.85"/>
<circle cx="652.0" cy="1.0" r="0.7" fill="#ffd8ff" fill-opacity="0.85"/>
<circle cx="264.2" cy="152.4" r="1.5" fill="#e070ff" fill-opacity="0.85"/>
<circle cx="496.3" cy="44.9" r="1.2" fill="#e070ff" fill-opacity="0.85"/>
<circle cx="492.5" cy="94.7" r="0.9" fill="#ffd8ff" fill-opacity="0.85"/>
<circle cx="403.9" cy="73.8" r="1.5" fill="#e070ff" fill-opacity="0.85"/>
<circle cx="438.9" cy="42.3" r="1.0" fill="#e070ff" fill-opacity="0.85"/>
<circle cx="592.0" cy="19.2" r="0.8" fill="#ffd8ff" fill-opacity="0.85"/>
<circle cx="422.7" cy="85.4" r="1.3" fill="#e070ff" fill-opacity="0.85"/>
<circle cx="805.5" cy="18.6" r="1.0" fill="#ffd8ff" fill-opacity="0.85"/>
<circle cx="525.2" cy="57.2" r="0.8" fill="#ffd8ff" fill-opacity="0.85"/>
<circle cx="382.3" cy="128.1" r="1.3" fill="#e070ff" fill-opacity="0.85"/>
<circle cx="701.5" cy="25.2" r="1.4" fill="#e070ff" fill-opacity="0.85"/>
<circle cx="135.5" cy="160.9" r="1.4" fill="#e070ff" fill-opacity="0.85"/>
<circle cx="566.9" cy="17.2" r="1.3" fill="#e070ff" fill-opacity="0.85"/>
<circle cx="645.9" cy="10.3" r="1.4" fill="#e070ff" fill-opacity="0.85"/>
<circle cx="650.8" cy="17.2" r="0.9" fill="#e070ff" fill-opacity="0.85"/>
<circle cx="340.0" cy="179.1" r="0.8" fill="#ffd8ff" fill-opacity="0.85"/>
<circle cx="609.2" cy="37.8" r="1.6" fill="#ffd8ff" fill-opacity="0.85"/>
<circle cx="674.2" cy="23.9" r="1.3" fill="#ffd8ff" fill-opacity="0.85"/>
<circle cx="533.6" cy="14.7" r="1.2" fill="#ffd8ff" fill-opacity="0.85"/>
<circle cx="259.0" cy="98.9" r="1.3" fill="#e070ff" fill-opacity="0.85"/>
<circle cx="351.0" cy="111.2" r="1.4" fill="#e070ff" fill-opacity="0.85"/>
<circle cx="725.1" cy="37.4" r="1.3" fill="#ffd8ff" fill-opacity="0.85"/>
<circle cx="220.5" cy="157.0" r="1.5" fill="#ffd8ff" fill-opacity="0.85"/>
<circle cx="287.8" cy="176.2" r="1.0" fill="#e070ff" fill-opacity="0.85"/>
<circle cx="365.3" cy="111.9" r="1.7" fill="#e070ff" fill-opacity="0.85"/>
<circle cx="474.0" cy="35.6" r="1.4" fill="#ffd8ff" fill-opacity="0.85"/>
<circle cx="239.4" cy="117.8" r="1.5" fill="#ffd8ff" fill-opacity="0.85"/>
<circle cx="477.3" cy="4.8" r="1.3" fill="#e070ff" fill-opacity="0.85"/>
<circle cx="258.8" cy="113.8" r="1.5" fill="#ffd8ff" fill-opacity="0.85"/>
<circle cx="294.1" cy="128.1" r="0.8" fill="#ffd8ff" fill-opacity="0.85"/>
<circle cx="651.6" cy="51.1" r="0.9" fill="#e070ff" fill-opacity="0.85"/>
<circle cx="408.0" cy="50.4" r="0.8" fill="#ffd8ff" fill-opacity="0.85"/>
<circle cx="392.8" cy="55.9" r="1.2" fill="#ffd8ff" fill-opacity="0.85"/>
<circle cx="372.2" cy="129.7" r="1.5" fill="#ffd8ff" fill-opacity="0.85"/>
<circle cx="233.9" cy="125.7" r="1.0" fill="#e070ff" fill-opacity="0.85"/>
<circle cx="192.2" cy="164.8" r="1.7" fill="#ffd8ff" fill-opacity="0.85"/>
<circle cx="764.9" cy="14.5" r="0.9" fill="#ffd8ff" fill-opacity="0.85"/>
<circle cx="743.6" cy="21.2" r="1.5" fill="#e070ff" fill-opacity="0.85"/>
<circle cx="436.9" cy="46.2" r="0.9" fill="#ffd8ff" fill-opacity="0.85"/>
<circle cx="219.3" cy="164.5" r="1.0" fill="#ffd8ff" fill-opacity="0.85"/>
<circle cx="132.7" cy="157.0" r="1.4" fill="#e070ff" fill-opacity="0.85"/>
<circle cx="591.8" cy="4.8" r="1.4" fill="#ffd8ff" fill-opacity="0.85"/>
<circle cx="193.2" cy="160.5" r="1.1" fill="#e070ff" fill-opacity="0.85"/>
<circle cx="235.8" cy="163.3" r="0.7" fill="#ffd8ff" fill-opacity="0.85"/>
<circle cx="223.5" cy="149.6" r="0.7" fill="#e070ff" fill-opacity="0.85"/>
<circle cx="261.6" cy="149.0" r="1.2" fill="#e070ff" fill-opacity="0.85"/>
<circle cx="414.2" cy="113.0" r="1.4" fill="#e070ff" fill-opacity="0.85"/>
<circle cx="567.6" cy="72.2" r="1.2" fill="#ffd8ff" fill-opacity="0.85"/>
<circle cx="205.0" cy="167.6" r="0.8" fill="#ffd8ff" fill-opacity="0.85"/>
<circle cx="734.0" cy="38.1" r="0.9" fill="#e070ff" fill-opacity="0.85"/>
<circle cx="342.5" cy="140.6" r="1.5" fill="#ffd8ff" fill-opacity="0.85"/>
<circle cx="250.6" cy="129.7" r="1.2" fill="#ffd8ff" fill-opacity="0.85"/>
<circle cx="680.3" cy="18.7" r="1.3" fill="#e070ff" fill-opacity="0.85"/>
<circle cx="200.5" cy="164.2" r="1.0" fill="#e070ff" fill-opacity="0.85"/>
<circle cx="381.5" cy="62.9" r="1.2" fill="#e070ff" fill-opacity="0.85"/>
<circle cx="284.0" cy="90.6" r="0.9" fill="#e070ff" fill-opacity="0.85"/>
<circle cx="320.6" cy="153.2" r="0.8" fill="#e070ff" fill-opacity="0.85"/>
<circle cx="375.5" cy="112.7" r="1.7" fill="#e070ff" fill-opacity="0.85"/>
<circle cx="593.0" cy="49.8" r="0.7" fill="#e070ff" fill-opacity="0.85"/>
<circle cx="726.5" cy="60.9" r="1.2" fill="#e070ff" fill-opacity="0.85"/>
<circle cx="282.9" cy="171.7" r="1.6" fill="#e070ff" fill-opacity="0.85"/>
<circle cx="340.9" cy="127.4" r="0.9" fill="#ffd8ff" fill-opacity="0.85"/>
<circle cx="432.6" cy="39.9" r="1.4" fill="#ffd8ff" fill-opacity="0.85"/>
<circle cx="338.5" cy="139.3" r="0.9" fill="#ffd8ff" fill-opacity="0.85"/>
<circle cx="652.6" cy="45.3" r="0.8" fill="#ffd8ff" fill-opacity="0.85"/>
<circle cx="831.9" cy="8.0" r="0.8" fill="#e070ff" fill-opacity="0.85"/>
<circle cx="415.3" cy="103.1" r="1.0" fill="#ffd8ff" fill-opacity="0.85"/>
<circle cx="354.6" cy="118.9" r="1.4" fill="#e070ff" fill-opacity="0.85"/>
<circle cx="802.2" cy="20.7" r="1.5" fill="#ffd8ff" fill-opacity="0.85"/>
<circle cx="379.3" cy="92.8" r="1.3" fill="#ffd8ff" fill-opacity="0.85"/>
<circle cx="159.7" cy="166.7" r="1.2" fill="#ffd8ff" fill-opacity="0.85"/>
<circle cx="396.0" cy="119.5" r="1.3" fill="#e070ff" fill-opacity="0.85"/>
<circle cx="304.9" cy="126.5" r="1.6" fill="#e070ff" fill-opacity="0.85"/>
<circle cx="581.5" cy="19.3" r="1.1" fill="#e070ff" fill-opacity="0.85"/>
<circle cx="646.0" cy="36.9" r="0.9" fill="#e070ff" fill-opacity="0.85"/>
<circle cx="462.9" cy="102.1" r="1.3" fill="#ffd8ff" fill-opacity="0.85"/>
<circle cx="459.2" cy="35.8" r="1.5" fill="#ffd8ff" fill-opacity="0.85"/>
<circle cx="625.2" cy="48.7" r="0.7" fill="#ffd8ff" fill-opacity="0.85"/>
<circle cx="323.5" cy="143.0" r="1.2" fill="#e070ff" fill-opacity="0.85"/>
<circle cx="269.0" cy="178.6" r="1.0" fill="#e070ff" fill-opacity="0.85"/>
<circle cx="529.1" cy="6.1" r="1.7" fill="#e070ff" fill-opacity="0.85"/>
<circle cx="576.2" cy="13.7" r="1.4" fill="#ffd8ff" fill-opacity="0.85"/>
<circle cx="533.6" cy="64.9" r="1.2" fill="#e070ff" fill-opacity="0.85"/>
<circle cx="210.5" cy="149.3" r="1.6" fill="#e070ff" fill-opacity="0.85"/>
<circle cx="265.7" cy="99.3" r="1.1" fill="#ffd8ff" fill-opacity="0.85"/>
<circle cx="741.4" cy="6.4" r="1.0" fill="#e070ff" fill-opacity="0.85"/>
<circle cx="230.2" cy="122.6" r="1.7" fill="#e070ff" fill-opacity="0.85"/>
<circle cx="530.3" cy="40.4" r="1.1" fill="#e070ff" fill-opacity="0.85"/>
<circle cx="253.2" cy="108.3" r="1.1" fill="#e070ff" fill-opacity="0.85"/>
<circle cx="166.7" cy="166.8" r="0.9" fill="#ffd8ff" fill-opacity="0.85"/>
<circle cx="437.4" cy="38.1" r="1.1" fill="#ffd8ff" fill-opacity="0.85"/>
<circle cx="306.5" cy="119.7" r="0.9" fill="#e070ff" fill-opacity="0.85"/>
<circle cx="754.7" cy="48.3" r="1.4" fill="#ffd8ff" fill-opacity="0.85"/>
<circle cx="306.0" cy="128.3" r="1.7" fill="#ffd8ff" fill-opacity="0.85"/>
<circle cx="536.7" cy="61.9" r="1.0" fill="#e070ff" fill-opacity="0.85"/>
<circle cx="502.3" cy="64.6" r="1.7" fill="#e070ff" fill-opacity="0.85"/>
<circle cx="427.7" cy="52.4" r="0.9" fill="#e070ff" fill-opacity="0.85"/>
<circle cx="556.4" cy="37.1" r="0.8" fill="#ffd8ff" fill-opacity="0.85"/>
<circle cx="128.0" cy="160.7" r="1.6" fill="#ffd8ff" fill-opacity="0.85"/>
<circle cx="327.3" cy="126.1" r="0.8" fill="#ffd8ff" fill-opacity="0.85"/>
<circle cx="622.7" cy="14.7" r="1.4" fill="#e070ff" fill-opacity="0.85"/>
<circle cx="725.4" cy="29.4" r="0.9" fill="#ffd8ff" fill-opacity="0.85"/>
<circle cx="682.9" cy="27.9" r="1.7" fill="#ffd8ff" fill-opacity="0.85"/>
<circle cx="515.9" cy="68.1" r="0.8" fill="#e070ff" fill-opacity="0.85"/>
<circle cx="164.6" cy="142.5" r="0.8" fill="#e070ff" fill-opacity="0.85"/>
<circle cx="759.9" cy="25.5" r="1.0" fill="#ffd8ff" fill-opacity="0.85"/>
<circle cx="337.5" cy="176.7" r="1.4" fill="#e070ff" fill-opacity="0.85"/>
<circle cx="395.9" cy="38.4" r="1.0" fill="#ffd8ff" fill-opacity="0.85"/>
<circle cx="353.9" cy="165.6" r="1.7" fill="#ffd8ff" fill-opacity="0.85"/>
<circle cx="746.5" cy="1.7" r="0.9" fill="#ffd8ff" fill-opacity="0.85"/>
<circle cx="412.1" cy="80.1" r="0.9" fill="#ffd8ff" fill-opacity="0.85"/>
<circle cx="320.5" cy="124.5" r="1.6" fill="#ffd8ff" fill-opacity="0.85"/>
<circle cx="439.1" cy="122.5" r="1.5" fill="#e070ff" fill-opacity="0.85"/>
<circle cx="305.6" cy="107.3" r="0.7" fill="#ffd8ff" fill-opacity="0.85"/>
<circle cx="610.5" cy="34.9" r="1.4" fill="#e070ff" fill-opacity="0.85"/>
<circle cx="737.9" cy="16.7" r="0.9" fill="#ffd8ff" fill-opacity="0.85"/>
</g>
<path d="M112 165L477 0M112 165L112 184M368 148L368 184M393 127L412 146M549 51L549 87M637 45L704 85M704 51L704 85M637 0L637 45M512 91L549 87" stroke="#ffe0ff" stroke-width="1.5" stroke-opacity="0.85"/>
<path d="M637 11L704 81" stroke="#ffb0ff" stroke-width="4" stroke-opacity="0.35" filter="url(#bl)"/>
<path d="M141.2 151.8l6.0 11.0M180.9 133.9l6.0 11.0M220.6 115.9l6.0 11.0M260.3 98.0l6.0 11.0M300.0 80.0l6.0 11.0M339.7 62.1l6.0 11.0M379.4 44.1l6.0 11.0M419.1 26.2l6.0 11.0M458.8 8.2l6.0 11.0" stroke="#e0c8ff" stroke-opacity="0.7" stroke-width="0.9"/>
<path d="M112 177 L512 -4" stroke="#d8c0ff" stroke-width="1" stroke-opacity="0.6"/>
<path d="M250 63L234 91M272 49L282 81M512 11L522 41M652 91L668 135M682 101L672 71M802 71L832 51M952 41L992 31M942 51L912 81" stroke="#c080ff" stroke-opacity="0.35" stroke-width="0.8"/>
<circle cx="16" cy="34" r="5" fill="#e050f8" fill-opacity="0.95" filter="url(#bl)"/>
<circle cx="16" cy="34" r="11.0" fill="#e050f8" fill-opacity="0.22" filter="url(#bl)"/>
<circle cx="35" cy="38" r="4" fill="#a030d0" fill-opacity="0.55" filter="url(#bl1)"/>
<circle cx="3" cy="14" r="5" fill="#9028c8" fill-opacity="0.45" filter="url(#bl)"/>
<circle cx="109" cy="81" r="2.5" fill="#d0a0ff" fill-opacity="0.95"/>
<circle cx="40" cy="103" r="6" fill="#6a1aa0" fill-opacity="0.45" filter="url(#bl)"/>
<circle cx="109" cy="117" r="6" fill="#5a1090" fill-opacity="0.4" filter="url(#bl)"/>
<circle cx="174" cy="54" r="1" fill="#ffffff" fill-opacity="0.9"/>
<circle cx="233" cy="77" r="2" fill="#ff90ff" fill-opacity="0.9"/>
<circle cx="897.5" cy="12" r="3.5" fill="#fff4ff" fill-opacity="1" filter="url(#bl1)"/>
<circle cx="897.5" cy="12" r="7.7" fill="#fff4ff" fill-opacity="0.22" filter="url(#bl)"/>
<circle cx="942.7" cy="3" r="2.5" fill="#ffffff" fill-opacity="0.95"/>
<circle cx="974" cy="19" r="2.2" fill="#ffe0ff" fill-opacity="0.9"/>
<circle cx="998" cy="28" r="3" fill="#e040f0" fill-opacity="0.85" filter="url(#bl1)"/>
<circle cx="998" cy="28" r="6.6" fill="#e040f0" fill-opacity="0.22" filter="url(#bl)"/>
<circle cx="966" cy="27" r="2.5" fill="#e040f0" fill-opacity="0.8"/>
<circle cx="950" cy="41" r="4.5" fill="#f040f0" fill-opacity="0.9" filter="url(#bl1)"/>
<circle cx="950" cy="41" r="9.9" fill="#f040f0" fill-opacity="0.22" filter="url(#bl)"/>
<circle cx="960" cy="39" r="4.5" fill="#f050f8" fill-opacity="0.9" filter="url(#bl1)"/>
<circle cx="960" cy="39" r="9.9" fill="#f050f8" fill-opacity="0.22" filter="url(#bl)"/>
<circle cx="970" cy="45" r="4" fill="#f040f0" fill-opacity="0.9" filter="url(#bl1)"/>
<circle cx="970" cy="45" r="8.8" fill="#f040f0" fill-opacity="0.22" filter="url(#bl)"/>
<circle cx="950" cy="51" r="4" fill="#f040f0" fill-opacity="0.9" filter="url(#bl1)"/>
<circle cx="950" cy="51" r="8.8" fill="#f040f0" fill-opacity="0.22" filter="url(#bl)"/>
<circle cx="964" cy="52" r="4" fill="#f040f0" fill-opacity="0.9" filter="url(#bl1)"/>
<circle cx="964" cy="52" r="8.8" fill="#f040f0" fill-opacity="0.22" filter="url(#bl)"/>
<circle cx="915.6" cy="46" r="4" fill="#b030d0" fill-opacity="0.6" filter="url(#bl1)"/>
<circle cx="808" cy="58" r="4" fill="#e040f0" fill-opacity="0.85" filter="url(#bl1)"/>
<circle cx="808" cy="58" r="8.8" fill="#e040f0" fill-opacity="0.22" filter="url(#bl)"/>
<circle cx="816" cy="64" r="4" fill="#e040f0" fill-opacity="0.85" filter="url(#bl1)"/>
<circle cx="816" cy="64" r="8.8" fill="#e040f0" fill-opacity="0.22" filter="url(#bl)"/>
<circle cx="807" cy="72" r="4.5" fill="#ff70ff" fill-opacity="0.95" filter="url(#bl1)"/>
<circle cx="807" cy="72" r="9.9" fill="#ff70ff" fill-opacity="0.22" filter="url(#bl)"/>
<circle cx="837" cy="45" r="3" fill="#e050f0" fill-opacity="0.8" filter="url(#bl1)"/>
<circle cx="837" cy="45" r="6.6" fill="#e050f0" fill-opacity="0.22" filter="url(#bl)"/>
<circle cx="844" cy="38" r="3" fill="#e050f0" fill-opacity="0.8" filter="url(#bl1)"/>
<circle cx="844" cy="38" r="6.6" fill="#e050f0" fill-opacity="0.22" filter="url(#bl)"/>
<circle cx="842" cy="51" r="3" fill="#d040e0" fill-opacity="0.75" filter="url(#bl1)"/>
<circle cx="832" cy="31" r="2" fill="#ffe0ff" fill-opacity="0.9"/>
<circle cx="868" cy="61" r="3" fill="#b030d0" fill-opacity="0.55" filter="url(#bl1)"/>
<circle cx="839" cy="77" r="3.5" fill="#f050f0" fill-opacity="0.85" filter="url(#bl1)"/>
<circle cx="839" cy="77" r="7.7" fill="#f050f0" fill-opacity="0.22" filter="url(#bl)"/>
<circle cx="792" cy="80" r="2.5" fill="#d040e0" fill-opacity="0.7"/>
<circle cx="766" cy="93" r="3" fill="#e040f0" fill-opacity="0.85" filter="url(#bl1)"/>
<circle cx="766" cy="93" r="6.6" fill="#e040f0" fill-opacity="0.22" filter="url(#bl)"/>
<circle cx="895.5" cy="76" r="6" fill="#a028c8" fill-opacity="0.5" filter="url(#bl)"/>
<circle cx="883.5" cy="86" r="7" fill="#8020b0" fill-opacity="0.4" filter="url(#bl)"/>
<circle cx="896.5" cy="106" r="7" fill="#7a20a8" fill-opacity="0.4" filter="url(#bl)"/>
<circle cx="968" cy="82" r="8" fill="#8a22b8" fill-opacity="0.45" filter="url(#bl)"/>
<circle cx="908.6" cy="130.5" r="7" fill="#5a1080" fill-opacity="0.35" filter="url(#bl)"/>
<circle cx="995" cy="74" r="5" fill="#7a20a8" fill-opacity="0.35" filter="url(#bl)"/>
<circle cx="683" cy="101" r="3" fill="#ffb0ff" fill-opacity="1" filter="url(#bl1)"/>
<circle cx="683" cy="101" r="6.6" fill="#ffb0ff" fill-opacity="0.22" filter="url(#bl)"/>
<circle cx="668" cy="136" r="4" fill="#e040f0" fill-opacity="0.85" filter="url(#bl1)"/>
<circle cx="668" cy="136" r="8.8" fill="#e040f0" fill-opacity="0.22" filter="url(#bl)"/>
<circle cx="742" cy="91" r="2" fill="#d050f0" fill-opacity="0.7"/>
<circle cx="707" cy="117" r="7" fill="#a030d0" fill-opacity="0.4" filter="url(#bl)"/>
<circle cx="542" cy="138" r="3" fill="#9030c0" fill-opacity="0.5" filter="url(#bl1)"/>
<circle cx="616" cy="141" r="5" fill="#8020b0" fill-opacity="0.4" filter="url(#bl)"/>
<circle cx="620" cy="97" r="2" fill="#d070ff" fill-opacity="0.8"/>
<circle cx="572" cy="111" r="2" fill="#c050e0" fill-opacity="0.6"/>
<circle cx="392" cy="11" r="1" fill="#ffffff" fill-opacity="0.9"/>
<circle cx="342" cy="26" r="1" fill="#ffffff" fill-opacity="0.8"/>
<circle cx="282" cy="46" r="1" fill="#ffffff" fill-opacity="0.8"/>
<circle cx="492" cy="63" r="1.2" fill="#ffffff" fill-opacity="0.9"/>
<circle cx="202" cy="41" r="1" fill="#ffffff" fill-opacity="0.7"/>
<circle cx="542" cy="11" r="1.2" fill="#ffffff" fill-opacity="0.7"/>
<circle cx="252" cy="181" r="5" fill="#6020a0" fill-opacity="0.35" filter="url(#bl)"/>
<circle cx="652" cy="171" r="6" fill="#6a1890" fill-opacity="0.3" filter="url(#bl)"/>
<circle cx="832" cy="166" r="5" fill="#5a1080" fill-opacity="0.3" filter="url(#bl)"/>
<path d="M900 16 L947 43" stroke="#7040d0" stroke-opacity="0.45" stroke-width="6" filter="url(#bl)"/>
<path d="M12 51 L62 6" stroke="#5a1aa0" stroke-opacity="0.4" stroke-width="7" filter="url(#bl)"/>
<path d="M832 41 L852 61" stroke="#8030c0" stroke-opacity="0.35" stroke-width="5" filter="url(#bl)"/>
</svg></div>
<!-- splitter -->
<div class="a" style="left:1106px;top:446px;width:4px;height:40px;background:#6d7073;border-radius:1px"></div>
<!-- mic icon symbol -->
<svg width="0" height="0" style="position:absolute"><defs>
<symbol id="mic" viewBox="0 0 14 14"><rect x="4.5" y="1" width="5" height="8" rx="2.5" fill="#e5484d"/><path d="M2.8 6.5 A4.2 4.2 0 0 0 11.2 6.5" fill="none" stroke="#e5484d" stroke-width="1.3"/><path d="M7 10.8 V13 M4.5 13 H9.5" stroke="#e5484d" stroke-width="1.3"/><path d="M1.5 13.2 L12.5 1" stroke="#28292c" stroke-width="2.6"/><path d="M1.5 13.2 L12.5 1" stroke="#e5484d" stroke-width="1.3"/></symbol>
</defs></svg>
<!-- Ira tile -->
<svg class="a" style="left:1124px;top:58px;overflow:hidden;border-radius:8px 0 0 0" width="210" height="119" viewBox="0 0 210 119">
<defs>
<filter id="irabl" x="-5%" y="-5%" width="110%" height="110%"><feGaussianBlur stdDeviation="0.8"/></filter>
<filter id="irabl2" x="-10%" y="-10%" width="120%" height="120%"><feGaussianBlur stdDeviation="0.6"/></filter>
<linearGradient id="iraFace" x1="0" y1="0" x2="0" y2="1"><stop offset="0" stop-color="#eed6cc"/><stop offset="0.6" stop-color="#e6c4b8"/><stop offset="1" stop-color="#d8aea2"/></linearGradient>
<linearGradient id="iraPil" x1="0" y1="0" x2="0" y2="1"><stop offset="0" stop-color="#c8c4c8"/><stop offset="1" stop-color="#c49a90"/></linearGradient>
</defs>
<g filter="url(#irabl)">
<rect width="210" height="119" fill="#c8c8c4"/>
<rect x="0" y="0" width="51" height="119" fill="#6b8aa8"/>
<rect x="0" y="0" width="51" height="12" fill="#7fa0c0"/>
<rect x="2" y="12" width="48" height="12" fill="#b8bcc0"/>
<rect x="2" y="24" width="48" height="16" fill="#3a6288"/>
<rect x="2" y="40" width="48" height="22" fill="#9aacbc"/>
<rect x="2" y="62" width="48" height="20" fill="#b8b6b0"/>
<rect x="10" y="55" width="12" height="25" fill="#a08c78"/>
<path d="M0 98 L51 74 L51 119 L0 119Z" fill="#6f98bc"/>
<path d="M0 108 L51 86 L51 119 L0 119Z" fill="#7fa6c8"/>
<rect x="20" y="10" width="2.5" height="78" fill="#2a4866"/><rect x="36" y="10" width="2.5" height="72" fill="#2a4866"/><rect x="48" y="0" width="3" height="80" fill="#24405e"/>
<rect x="51" y="0" width="12" height="119" fill="url(#iraPil)"/>
<rect x="63" y="0" width="11" height="119" fill="#284870"/>
<rect x="74" y="0" width="9" height="50" fill="#b8c0c8"/>
<rect x="83" y="0" width="127" height="42" fill="#34485e"/>
<rect x="83" y="5" width="90" height="3" fill="#8a9cb0"/>
<rect x="110" y="12" width="12" height="32" fill="#2f6aae"/>
<rect x="122" y="15" width="40" height="27" fill="#3d6286"/>
<rect x="165" y="2" width="45" height="24" fill="#cfd3d4"/>
<rect x="165" y="26" width="45" height="20" fill="#3c5062"/>
<rect x="83" y="42" width="127" height="77" fill="#d6d2ca"/>
<rect x="83" y="42" width="85" height="8" fill="#e2e2de"/>
<rect x="96" y="50" width="14" height="6" fill="#4a78b4"/><rect x="122" y="50" width="16" height="6" fill="#4a78b4"/><rect x="145" y="50" width="12" height="6" fill="#5a84b8"/>
<rect x="100" y="58" width="18" height="30" rx="3" fill="#e8e6e0"/>
<rect x="140" y="56" width="8" height="8" rx="4" fill="#3a3d44"/>
<rect x="166" y="62" width="24" height="34" rx="5" fill="#e6e4de"/>
<path d="M168 72 L178 76 L188 72 M168 80 L178 84 L188 80 M168 88 L178 92 L188 88" stroke="#8c8c90" stroke-width="2" fill="none"/>
<rect x="188" y="52" width="12" height="16" rx="3" fill="#d98a3c"/>
<rect x="200" y="50" width="10" height="30" fill="#c8ccd0"/>
<rect x="176" y="96" width="34" height="23" fill="#e0d6c6"/>
<rect x="130" y="70" width="30" height="10" fill="#c8c0b4"/>
<rect x="140" y="96" width="36" height="23" fill="#d0cac0"/>
</g>
<g filter="url(#irabl2)">
<path d="M50 119 L50 66 Q50 30 86 26 Q124 26 128 66 L128 119 Z" fill="#2a2220"/>
<path d="M61 62 Q62 42 86 42 Q108 42 110 64 L109 88 Q104 106 87 108 Q67 105 63 88 Z" fill="url(#iraFace)"/>
<path d="M58 66 Q60 36 86 34 Q108 36 114 62 Q104 44 88 44 Q68 46 58 66Z" fill="#2a2220"/>
<path d="M67 69 Q72 66 78 69 L78 71 Q72 70 67 71Z M93 69 Q98 66 104 69 L104 71 Q98 70 93 71Z" fill="#3a2420"/>
<path d="M80 95 Q87 92 95 95 Q87 99 80 95Z" fill="#b86868"/>
<path d="M84 76 Q82 84 86 86" stroke="#c89c90" stroke-width="1" fill="none"/>
<rect x="80" y="107" width="16" height="12" fill="#d6a898"/>
</g>
</svg>
<div class="a" style="left:1124px;top:58px;width:210px;height:119px;border:2px solid #2fdc8a;border-radius:8px 0 0 0"></div>
<div class="lbl" style="left:1127px;top:155px;width:63px;padding-left:4px;background:rgba(40,40,44,0.8)">Ira Alevra</div>
<!-- Atike tile -->
<svg class="a" style="left:1334px;top:59px;overflow:hidden;border-radius:0 8px 0 0" width="207" height="117" viewBox="0 0 207 117">
<defs>
<linearGradient id="atHair" x1="0" y1="0" x2="0" y2="1"><stop offset="0" stop-color="#9a5436"/><stop offset="1" stop-color="#b8784e"/></linearGradient>
<linearGradient id="atFace" x1="0" y1="0" x2="0" y2="1"><stop offset="0" stop-color="#e8b4a6"/><stop offset="1" stop-color="#dc9e90"/></linearGradient>
<filter id="atbl" x="-10%" y="-10%" width="120%" height="120%"><feGaussianBlur stdDeviation="0.6"/></filter>
</defs>
<rect width="207" height="117" fill="#fdfdfd"/>
<text x="13" y="63" font-family="Liberation Sans" font-weight="bold" font-style="italic" font-size="30" letter-spacing="-0.8" fill="#111" stroke="#111" stroke-width="1.2">bursat</text>
<text x="142" y="63" font-family="Liberation Sans" font-weight="bold" font-style="italic" font-size="30" letter-spacing="-0.8" fill="#111" stroke="#111" stroke-width="1.2">ark</text>
<text x="189" y="48" font-family="Liberation Sans" font-size="10" fill="#111">&#174;</text>
<text x="14" y="77" font-family="Liberation Sans" font-style="italic" font-size="7.5" fill="#333">Bursa Teknik &#220;nive</text>
<text x="168" y="77" font-family="Liberation Sans" font-style="italic" font-size="7.5" fill="#333">B&#246;lgesi</text>
<g filter="url(#atbl)">
<path d="M70 117 L72 94 Q73 66 80 48 Q92 19 119 19 Q148 19 160 46 Q170 72 178 104 L182 117 Z" fill="url(#atHair)"/>
<path d="M90 56 Q92 34 116 33 Q140 34 142 58 L141 78 Q137 94 116 94 Q95 93 91 78 Z" fill="url(#atFace)"/>
<path d="M88 54 Q98 30 118 29 Q142 31 147 58 Q136 40 116 39 Q98 41 88 54Z" fill="#94502f"/>
<ellipse cx="102" cy="63" rx="11" ry="8" fill="#7a98e8" fill-opacity="0.5" stroke="#3a2222" stroke-width="2"/>
<ellipse cx="128" cy="63" rx="11" ry="8" fill="#c8b8c8" fill-opacity="0.35" stroke="#3a2222" stroke-width="2"/>
<path d="M113 62 h4" stroke="#3a2222" stroke-width="1.6"/>
<path d="M107 86 Q114 84 121 86 Q114 89 107 86Z" fill="#b85c5c"/>
<path d="M60 117 Q64 98 84 94 L150 94 Q182 98 192 117Z" fill="#2e2420"/>
</g>
</svg>
<div class="lbl m" style="left:1336px;top:155px;width:190px;background:rgba(40,40,44,0.82)"><svg class="a" style="left:4px;top:3px" width="13" height="13"><use href="#mic"/></svg>Atike K&#246;ken_Bursateknopark</div>
<!-- Row 2 -->
<div class="av" style="left:1190px;top:195px;background:#0e5cab">Z</div>
<div class="lbl m" style="left:1128px;top:272px;width:205px"><svg class="a" style="left:4px;top:3px" width="13" height="13"><use href="#mic"/></svg>Yasemin AKTOPRAK-Bursatek...</div>
<div class="bn" style="left:1373px;top:225px">Fireflies.ai&nbsp; Note...</div>
<div class="lbl m" style="left:1336px;top:272px;width:198px"><svg class="a" style="left:4px;top:3px" width="13" height="13"><use href="#mic"/></svg>Fireflies.ai Notetaker Nurbeya</div>
<!-- Row 3 -->
<div class="av" style="left:1190px;top:312px;background:#7e22ab">Y</div>
<div class="lbl" style="left:1128px;top:389px;width:205px">&#214;&#287;g.rG&#246;r.Y&#305;ld&#305;z EVRENKAYA/AFS...</div>
<div class="bn" style="left:1390px;top:341px">Hasan &#350;AH&#304;N</div>
<div class="lbl m" style="left:1336px;top:389px;width:102px"><svg class="a" style="left:4px;top:3px" width="13" height="13"><use href="#mic"/></svg>Hasan &#350;AH&#304;N</div>
<!-- Row 4 -->
<div class="bn" style="left:1165px;top:458px">read.ai&nbsp; meeting...</div>
<div class="lbl" style="left:1128px;top:506px;width:134px">read.ai meeting notes</div>
<div class="bn" style="left:1372px;top:458px">G&#246;khan&nbsp; KAVUT(...</div>
<div class="lbl m" style="left:1336px;top:506px;width:169px;letter-spacing:-0.2px"><svg class="a" style="left:4px;top:3px" width="13" height="13"><use href="#mic"/></svg>G&#246;khan KAVUT(FE-TECH)</div>
<!-- Row 5 -->
<div class="av" style="left:1190px;top:546px;background:#7b52c6">N</div>
<div class="lbl m" style="left:1128px;top:623px;width:110px"><svg class="a" style="left:4px;top:3px" width="13" height="13"><use href="#mic"/></svg>Nursema Ciftci</div>
<div class="bn" style="left:1389px;top:575px">G&#246;khan &#350;ahin</div>
<div class="lbl m" style="left:1336px;top:623px;width:103px"><svg class="a" style="left:4px;top:3px" width="13" height="13"><use href="#mic"/></svg>G&#246;khan &#350;ahin</div>
<!-- Row 6 -->
<div class="bn" style="left:1169px;top:692px">Melike Miray Nas</div>
<div class="lbl m" style="left:1128px;top:740px;width:127px"><svg class="a" style="left:4px;top:3px" width="13" height="13"><use href="#mic"/></svg>Melike Miray Nas</div>
<div class="av" style="left:1398px;top:663px;background:#5a2db2">B</div>
<div class="lbl m" style="left:1336px;top:740px;width:205px"><svg class="a" style="left:4px;top:3px" width="13" height="13"><use href="#mic"/></svg>Ay&#351;enur Alg&#252;l_Bursatechnopark</div>
<!-- Row 7 Havanur -->
<svg class="a" style="left:1294px;top:780px;border-radius:5px;overflow:hidden" width="79" height="78" viewBox="0 0 79 78">
<defs><filter id="hvbl"><feGaussianBlur stdDeviation="0.7"/></filter></defs><g filter="url(#hvbl)">
<rect width="79" height="78" fill="#6e4a26"/>
<g fill="#dcc9a4"><rect x="0" y="0" width="5" height="78"/><rect x="10.5" y="0" width="5" height="78"/><rect x="21" y="0" width="4.5" height="78"/><rect x="31.5" y="0" width="4.5" height="78"/><rect x="43" y="0" width="4.5" height="78"/><rect x="54.5" y="0" width="4.5" height="78"/><rect x="67" y="0" width="4.5" height="78"/></g>
<path d="M26 48 Q24 26 38 23 Q52 24 51 46 L50 60 L28 60Z" fill="#8d9597"/>
<path d="M31 38 Q31 29 39 29 Q48 29 48 38 L47 46 Q44 52 39 52 Q33 51 31 45Z" fill="#e2c4ae"/>
<path d="M30 52 Q39 60 50 52 L50 62 L30 62Z" fill="#7f888b"/>
<path d="M14 78 Q16 62 30 60 L50 60 Q63 62 66 78Z" fill="#1c1c20"/>
<path d="M33 60 L46 60 L44 78 L35 78Z" fill="#e6ecef"/>
<path d="M14 78 Q15 68 20 64 L24 78Z M66 78 Q65 68 60 64 L56 78Z" fill="#e4e8ea"/>
</g></svg>
<div class="lbl m" style="left:1232px;top:856px;width:120px"><svg class="a" style="left:4px;top:3px" width="13" height="13"><use href="#mic"/></svg>Havanur YILMAZ</div>
</body></html>
